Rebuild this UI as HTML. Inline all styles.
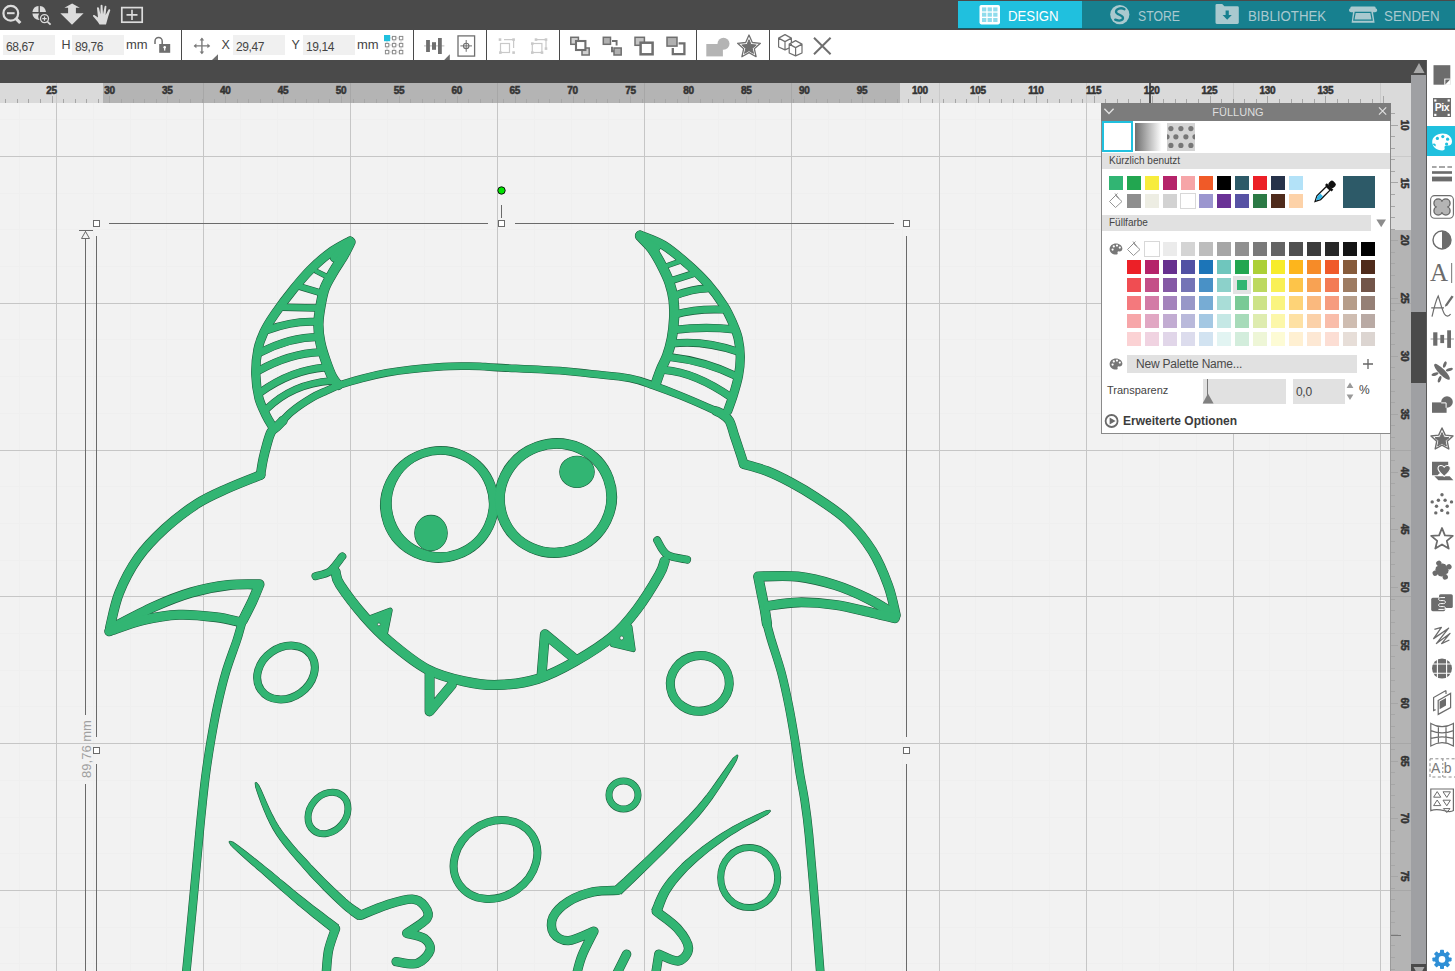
<!DOCTYPE html>
<html><head><meta charset="utf-8"><title>Design</title>
<style>
*{margin:0;padding:0;box-sizing:border-box}
html,body{width:1455px;height:971px;overflow:hidden;background:#fff;font-family:"Liberation Sans",sans-serif}
.abs{position:absolute}
#top{left:0;top:0;width:1455px;height:30px;background:#4a4a4a}
#tool{left:0;top:30px;width:1455px;height:30px;background:#fff}
#band{left:0;top:60px;width:1427px;height:23px;background:#4a4a4a}
#canvas{left:0;top:103px;width:1391px;height:868px;background:#f2f2f2}
#side{left:1427px;top:60px;width:28px;height:911px;background:#fff}
.fld{position:absolute;top:35px;height:20px;background:#f0f0f0;color:#444;font-size:12px;line-height:24px;overflow:hidden;padding-left:3px;letter-spacing:-0.4px}
.lbl{position:absolute;top:35px;height:20px;color:#444;font-size:13px;line-height:20px}
.lbl.c{font-size:12.5px;line-height:20px}
.dv{position:absolute;top:30px;width:1px;height:30px;background:#4a4a4a}
.tab{position:absolute;top:1px;height:27px;color:#a9c9cf;font-size:15px;line-height:29px;white-space:nowrap;transform-origin:0 50%}
.rl{position:absolute;font-weight:bold;font-size:10px;color:#333;-webkit-text-stroke:0.5px #333;line-height:10px;letter-spacing:-0.3px;white-space:nowrap}
svg{position:absolute;left:0;top:0;overflow:visible}
</style></head><body>
<div class="abs" id="top"></div>
<div class="abs" id="tool"></div>
<div class="abs" id="band"></div>
<div class="abs" id="canvas"></div>

<svg width="1455" height="971" viewBox="0 0 1455 971" shape-rendering="crispEdges">
<path d="M19.5 103V971M93.5 103V971M130.5 103V971M166.5 103V971M240.5 103V971M277.5 103V971M313.5 103V971M387.5 103V971M424.5 103V971M461.5 103V971M534.5 103V971M571.5 103V971M608.5 103V971M681.5 103V971M718.5 103V971M755.5 103V971M828.5 103V971M865.5 103V971M902.5 103V971M975.5 103V971M1012.5 103V971M1049.5 103V971M1122.5 103V971M1159.5 103V971M1196.5 103V971M1269.5 103V971M1306.5 103V971M1343.5 103V971M0 119.5H1391M0 193.5H1391M0 229.5H1391M0 266.5H1391M0 339.5H1391M0 376.5H1391M0 413.5H1391M0 486.5H1391M0 523.5H1391M0 560.5H1391M0 633.5H1391M0 670.5H1391M0 706.5H1391M0 780.5H1391M0 817.5H1391M0 853.5H1391M0 927.5H1391M0 963.5H1391" stroke="#efefef" stroke-width="1" fill="none"/>
<path d="M0 156.5H1391M56.5 103V971M0 303.5H1391M203.5 103V971M0 450.5H1391M350.5 103V971M0 596.5H1391M497.5 103V971M0 743.5H1391M644.5 103V971M0 890.5H1391M791.5 103V971M939.5 103V971M1086.5 103V971M1233.5 103V971M1380.5 103V971" stroke="#c6c6c6" stroke-width="1" fill="none"/>
</svg>
<svg width="1455" height="971" viewBox="0 0 1455 971"><defs><clipPath id="cv"><rect x="0" y="103" width="1391" height="868"/></clipPath></defs><g clip-path="url(#cv)">
<g fill="none" stroke="#1b5a3a" stroke-linecap="round" stroke-linejoin="round">
<path d="M350.0 241.0C346.7 242.9 336.6 247.9 330.0 252.7C323.4 257.5 316.3 263.9 310.2 270.0C304.1 276.1 299.1 282.2 293.2 289.5C287.3 296.8 279.8 306.7 274.9 313.8C270.0 320.9 266.8 326.0 264.0 332.0C261.2 338.0 259.3 342.6 257.9 349.7C256.5 356.8 255.6 366.4 255.8 374.4C256.0 382.4 257.2 391.1 258.9 397.9C260.6 404.7 263.8 410.4 266.0 415.2C268.2 419.9 271.3 424.5 272.4 426.4" stroke-width="9.3"/>
<path d="M348.5 243L334 258" stroke-width="8.0"/>
<path d="M350.5 242.0C349.4 244.2 346.4 250.5 343.6 255.4C340.8 260.3 336.7 266.0 333.6 271.4C330.5 276.8 326.9 282.3 324.8 287.8C322.7 293.3 321.9 298.5 320.8 304.5C319.7 310.5 318.5 317.6 318.4 323.9C318.3 330.2 319.1 336.4 320.3 342.3C321.5 348.2 323.3 353.8 325.3 359.6C327.3 365.4 330.0 372.7 332.1 376.9C334.2 381.1 337.0 383.6 338.0 385.0" stroke-width="10.3"/>
<path d="M316.6 271.4L325.3 275.7" stroke-width="5.5"/>
<path d="M300.6 286.8L319.1 292.4" stroke-width="7.0"/>
<path d="M282 307.2L316.6 308" stroke-width="7.4"/>
<path d="M267.8 330.0Q292.2 320.7 315.4 321.8" stroke-width="8.0"/>
<path d="M259.8 352.8Q289.3 337.1 319.1 337.0" stroke-width="8.0"/>
<path d="M258.5 370.7Q289.4 353.3 320.3 352.2" stroke-width="8.0"/>
<path d="M259.8 392.7Q291.2 370.0 325.3 367.4" stroke-width="8.0"/>
<path d="M266.6 409.0Q292.5 383.7 330.9 380.9" stroke-width="7.5"/>
<path d="M260.5 475.0C260.9 472.4 262.1 464.2 263.2 459.1C264.3 454.0 265.6 448.8 266.9 444.3C268.2 439.8 269.5 434.8 271.2 431.9C272.9 428.9 273.6 430.0 277.0 426.6C280.4 423.2 286.1 416.3 291.9 411.5C297.7 406.7 306.0 401.3 311.7 397.9C317.4 394.5 321.1 393.2 326.0 391.0C330.9 388.8 334.8 386.7 340.8 384.6C346.8 382.5 354.3 380.4 361.9 378.4C369.5 376.4 378.4 374.3 386.6 372.8C394.9 371.3 403.1 370.2 411.4 369.3C419.6 368.4 427.9 367.7 436.1 367.2C444.4 366.7 453.6 366.3 460.9 366.2C468.2 366.1 474.0 366.1 480.0 366.3C486.0 366.5 483.6 366.8 496.9 367.5C510.2 368.2 544.6 369.7 560.0 370.7C575.4 371.8 577.8 372.4 589.5 373.7C601.2 375.0 619.3 376.3 630.0 378.3C640.7 380.3 645.2 382.6 653.5 385.5C661.8 388.4 671.5 392.1 680.0 395.5C688.5 398.9 697.7 402.9 704.7 406.0C711.7 409.1 717.9 411.5 722.0 414.0C726.1 416.5 727.3 417.2 729.4 420.8C731.5 424.4 732.5 430.0 734.4 435.6C736.3 441.2 739.0 449.5 740.6 454.2C742.2 458.9 743.2 462.4 743.7 464.0" stroke-width="7.8"/>
<path d="M716.0 411.0C717.0 411.5 719.8 412.4 722.0 414.0C724.2 415.6 727.3 417.2 729.4 420.8C731.5 424.4 732.5 430.0 734.4 435.6C736.3 441.2 739.0 449.5 740.6 454.2C742.2 458.9 743.2 462.4 743.7 464.0" stroke-width="9.6"/>
<path d="M283.0 420.5C282.0 421.5 279.0 424.7 277.0 426.6C275.0 428.5 272.9 428.9 271.2 431.9C269.5 434.8 268.2 439.8 266.9 444.3C265.6 448.8 264.3 454.0 263.2 459.1C262.1 464.2 260.9 472.4 260.5 475.0" stroke-width="9.6"/>
<path d="M640.0 235.0C643.9 236.7 655.7 240.4 663.6 245.2C671.5 250.0 679.9 257.4 687.2 263.8C694.5 270.2 701.1 276.5 707.2 283.4C713.3 290.3 719.4 298.7 723.7 305.4C728.0 312.1 730.6 318.3 733.0 323.8C735.4 329.3 737.0 333.0 738.2 338.5C739.4 344.0 740.2 350.8 740.3 357.0C740.3 363.2 739.7 369.2 738.5 375.6C737.3 382.0 735.0 389.5 733.2 395.4C731.4 401.3 728.6 408.3 727.7 410.9" stroke-width="9.3"/>
<path d="M642 237.5L656.5 248" stroke-width="8.0"/>
<path d="M640.0 236.0C640.4 236.4 640.4 236.3 642.4 238.5C644.4 240.7 648.6 244.2 652.0 249.0C655.4 253.8 659.9 261.9 662.8 267.6C665.7 273.3 667.8 277.6 669.6 283.0C671.4 288.4 672.8 293.8 673.5 299.7C674.2 305.6 674.4 311.8 674.1 318.3C673.8 324.8 673.0 332.2 671.8 338.5C670.6 344.8 668.9 350.7 667.1 355.8C665.3 360.9 662.7 365.0 660.9 369.4C659.1 373.8 657.0 380.2 656.2 382.4" stroke-width="10.3"/>
<path d="M663.4 267L679.4 261.4" stroke-width="5.5"/>
<path d="M669.6 281.2L693 273.8" stroke-width="7.2"/>
<path d="M673.9 296.0Q693.3 288.7 706.6 288.6" stroke-width="8.0"/>
<path d="M674.5 314.6Q697.4 308.3 722.7 309.6" stroke-width="8.0"/>
<path d="M674.5 329.8Q704.3 326.1 733.8 329.3" stroke-width="8.3"/>
<path d="M672.0 343.5Q703.7 339.9 737.5 351.5" stroke-width="8.0"/>
<path d="M669.6 357.1Q705.5 361.1 736.3 376.2" stroke-width="8.0"/>
<path d="M664.6 370.0Q695.1 372.3 732.0 397.9" stroke-width="8.0"/>
<path d="M260.6 475.0C255.1 477.2 238.2 483.6 227.7 488.4C217.1 493.2 207.6 497.0 197.2 503.7C186.7 510.4 174.9 519.4 165.0 528.4C155.1 537.5 145.4 547.4 137.8 558.1C130.2 568.9 123.8 581.4 119.2 592.8C114.6 604.1 111.7 620.8 110.2 626.4" stroke-width="9.8"/>
<path d="M110.2 628.9C117.5 625.2 140.7 612.7 154.2 606.6C167.8 600.5 179.0 596.1 191.3 592.5C203.7 588.9 217.1 586.4 228.5 585.1C239.8 583.7 254.2 584.5 259.4 584.3C258.2 587.3 254.8 596.1 252.0 602.0C249.2 607.9 244.5 617.0 243.0 620.0" stroke-width="10.2"/>
<path d="M252.0 602.0C250.5 605.0 245.5 613.7 243.0 620.0C240.5 626.3 239.8 631.2 236.9 640.0C234.0 648.8 228.8 662.0 225.6 673.0C222.3 684.0 219.8 695.0 217.4 706.0C215.0 717.0 213.1 727.8 211.2 738.8C209.3 749.8 207.5 761.6 206.1 771.8C204.7 782.0 203.9 789.6 202.8 800.0C201.7 810.4 201.1 815.9 199.4 834.0C197.7 852.1 194.7 885.0 192.5 908.5C190.3 932.0 187.1 963.9 186.0 975.0" stroke-width="8.7"/>
<path d="M109.2 631.3C114.8 629.5 131.5 623.0 143.1 620.2C154.7 617.4 166.8 615.3 179.0 614.8C191.1 614.3 206.0 616.0 216.1 617.2C226.2 618.4 235.7 621.2 239.6 621.9" stroke-width="10.0"/>
<path d="M743.7 464.0C747.5 465.1 758.6 467.8 766.5 470.9C774.4 474.0 783.0 478.2 791.2 482.6C799.5 487.0 806.6 491.1 816.0 497.4C825.4 503.7 838.1 511.6 847.4 520.5C856.8 529.4 865.4 540.1 872.2 550.9C879.0 561.8 884.3 574.8 888.2 585.6C892.2 596.3 894.6 610.3 895.9 615.3" stroke-width="9.8"/>
<path d="M893.3 613.4C889.0 610.9 877.0 603.0 867.3 598.3C857.6 593.6 846.6 588.6 835.1 585.0C823.6 581.4 810.8 578.0 798.0 576.6C785.2 575.2 764.8 576.5 758.2 576.5C758.8 579.2 760.4 587.5 761.5 593.0C762.6 598.5 763.8 604.3 764.8 609.5C765.7 614.7 766.6 621.6 767.0 624.0" stroke-width="10.2"/>
<path d="M764.8 609.5C765.1 611.9 765.9 618.9 767.0 624.0C768.1 629.1 768.9 631.8 771.3 640.0C773.7 648.2 778.6 662.0 781.5 673.0C784.4 684.0 786.7 695.0 788.9 706.0C791.1 717.0 792.9 727.8 794.7 738.8C796.5 749.8 798.0 761.6 799.6 771.8C801.2 782.0 803.0 789.5 804.6 800.0C806.2 810.5 807.3 817.5 809.0 835.0C810.7 852.5 813.1 881.7 815.0 905.0C816.9 928.3 819.6 963.3 820.5 975.0" stroke-width="8.7"/>
<path d="M767.8 605.9C772.8 605.3 786.7 602.6 797.9 602.4C809.2 602.2 822.7 603.1 835.1 604.9C847.4 606.6 862.2 610.6 872.2 612.8C882.1 615.0 891.1 617.3 894.9 618.2" stroke-width="10.0"/>
<path d="M380.5 504.5a59.0 57.5 0 1 0 118.0 0a59.0 57.5 0 1 0 -118.0 0ZM391.6 503.8a49.0 49.2 0 1 0 98.0 0a49.0 49.2 0 1 0 -98.0 0Z" transform="rotate(-20 439.5 504.5)" fill="#1b5a3a" fill-rule="evenodd" stroke-width="1.1"/>
<path d="M494.7 498.0a61.0 59.0 0 1 0 122.0 0a61.0 59.0 0 1 0 -122.0 0ZM504.1 498.2a51.4 49.8 0 1 0 102.8 0a51.4 49.8 0 1 0 -102.8 0Z" transform="rotate(-20 555.7 498.0)" fill="#1b5a3a" fill-rule="evenodd" stroke-width="1.1"/>
<ellipse cx="431.0" cy="533.0" rx="16.2" ry="17.6" fill="#1b5a3a" stroke-width="1.1"/>
<ellipse cx="577.0" cy="471.8" rx="17.2" ry="15.6" fill="#1b5a3a" stroke-width="1.1"/>
<path d="M335.5 571.9C336.3 574.0 335.1 577.2 340.0 584.7C344.9 592.2 356.5 607.4 364.7 616.9C373.0 626.4 379.2 633.0 389.5 641.6C399.8 650.3 414.2 662.3 426.6 668.9C439.0 675.5 451.8 678.6 463.7 681.2C475.7 683.9 486.0 685.4 498.4 684.9C510.7 684.5 525.2 682.7 537.9 678.8C550.7 674.8 562.7 668.5 575.1 661.4C587.4 654.4 601.9 645.4 612.2 636.7C622.5 628.0 629.1 619.8 636.9 609.5C644.7 599.2 654.6 582.9 659.2 574.8C663.8 566.8 663.7 563.5 664.6 561.2" stroke-width="10.2"/>
<path d="M315.5 576.2C317.9 575.3 325.4 574.5 329.9 571.2C334.4 567.9 340.2 558.8 342.3 556.4" stroke-width="8.0"/>
<path d="M657.2 540.3C658.8 542.7 662.1 551.4 667.1 554.6C672.1 557.9 683.8 558.8 687.1 559.6" stroke-width="8.0"/>
<path d="M370.9 617.4L390.2 610.2L385.8 632.2Z" fill="#1b5a3a" stroke-width="5.0"/>
<path d="M429.6 674.3L429.6 711.4L451.8 684.9" stroke-width="10.0"/>
<path d="M541.6 675.1L544.9 634.2L575.1 659.0" stroke-width="10.0"/>
<path d="M612.2 644.6L633.2 649.6L630.0 626.8Z" fill="#1b5a3a" stroke-width="5.0"/>
<ellipse cx="286.0" cy="672.5" rx="30.5" ry="25.0" transform="rotate(-35 286.0 672.5)" stroke-width="8.0"/>
<ellipse cx="699.8" cy="683.4" rx="29.5" ry="27.8" transform="rotate(-10 699.8 683.4)" stroke-width="9.0"/>
<ellipse cx="328.0" cy="813.0" rx="22.5" ry="18.0" transform="rotate(-50 328.0 813.0)" stroke-width="7.0"/>
<ellipse cx="623.5" cy="795.0" rx="14.5" ry="14.0" transform="rotate(0 623.5 795.0)" stroke-width="7.0"/>
<ellipse cx="495.5" cy="859.5" rx="44.0" ry="37.0" transform="rotate(-35 495.5 859.5)" stroke-width="8.0"/>
<ellipse cx="749.2" cy="877.6" rx="28.5" ry="30.0" transform="rotate(0 749.2 877.6)" stroke-width="7.0"/>
<path d="M255.3 783.0L255.7 786.9L257.3 791.8L259.3 797.5L261.6 803.9L264.3 810.6L267.2 817.3L270.3 823.7L273.5 829.6L276.9 835.1L280.6 840.4L284.5 845.6L288.6 850.7L292.8 855.7L297.1 860.6L301.3 865.4L305.5 870.2L309.8 875.0L314.3 879.9L319.0 884.7L323.6 889.5L328.2 894.0L332.5 898.3L336.5 902.1L340.0 905.4L343.2 908.3L346.1 910.8L348.8 912.9L351.1 914.7L353.2 916.2L355.0 917.4L356.4 918.4L357.5 919.2L362.9 911.5L361.6 910.7L360.0 909.7L358.3 908.6L356.3 907.3L354.1 905.8L351.6 903.9L348.8 901.7L345.8 899.1L342.3 895.9L338.3 892.2L333.9 888.1L329.3 883.7L324.6 879.1L320.0 874.4L315.4 869.7L311.0 865.1L306.8 860.5L302.5 855.8L298.1 851.1L293.9 846.3L289.8 841.4L285.8 836.5L282.1 831.5L278.7 826.5L275.4 821.0L272.2 814.9L269.1 808.4L266.2 802.0L263.5 795.8L261.1 790.3L258.9 785.7L256.3 782.6Z" fill="#1b5a3a" stroke-width="1.2"/>
<path d="M360.2 915.4C364.7 913.6 378.8 907.5 387.4 904.7C396.1 902.0 406.0 898.8 412.2 899.1C418.4 899.3 422.1 902.8 424.5 906.0C427.0 909.2 430.0 913.8 427.0 918.4C424.0 922.9 410.1 930.7 406.7 933.2C409.7 934.1 420.7 935.8 424.5 938.6C428.4 941.5 431.2 946.4 430.0 950.5C428.7 954.6 422.8 961.5 417.1 963.4C411.5 965.2 399.6 961.9 396.1 961.6" stroke-width="9.4"/>
<path d="M229.2 842.0L231.0 845.2L234.2 848.4L238.2 852.0L242.6 856.0L247.3 860.2L252.2 864.5L257.0 868.7L261.6 872.6L266.0 876.5L270.5 880.6L275.1 884.6L279.8 888.8L284.5 892.9L289.1 896.9L293.7 900.9L298.2 904.7L302.9 908.6L307.8 912.6L312.8 916.7L317.7 920.6L322.4 924.3L326.5 927.6L330.0 930.3L332.6 932.4L338.4 925.0L335.7 923.0L332.1 920.3L327.9 917.2L323.2 913.6L318.2 909.8L313.1 905.9L308.1 902.0L303.4 898.3L298.9 894.7L294.2 890.9L289.5 887.0L284.7 883.0L279.9 879.1L275.2 875.1L270.5 871.3L265.9 867.6L261.1 863.8L256.1 859.8L251.0 855.7L246.0 851.8L241.3 848.2L237.0 845.0L233.4 842.4L229.9 841.3Z" fill="#1b5a3a" stroke-width="1.2"/>
<path d="M335.5 928.7C334.3 932.4 330.1 942.8 328.5 950.5C327.0 958.3 326.5 971.1 326.1 975.3" stroke-width="9.4"/>
<path d="M737.0 755.1L733.4 758.1L729.7 763.0L725.6 768.9L721.0 775.4L716.2 782.2L711.3 789.0L706.5 795.5L701.9 801.2L697.5 806.4L693.2 811.2L688.8 815.9L684.3 820.5L679.7 825.1L674.9 829.8L669.8 834.8L664.5 840.0L658.5 845.8L651.8 852.2L644.6 859.1L637.3 865.9L630.3 872.4L624.0 878.4L618.6 883.3L614.7 887.0L621.2 893.8L625.0 890.0L630.3 885.0L636.5 879.0L643.4 872.3L650.6 865.4L657.7 858.4L664.4 851.8L670.3 845.8L675.5 840.5L680.5 835.4L685.2 830.5L689.7 825.7L694.2 820.9L698.5 816.0L702.8 810.8L707.1 805.4L711.6 799.3L716.3 792.5L721.0 785.5L725.5 778.4L729.7 771.6L733.5 765.4L736.4 760.2L737.8 755.7Z" fill="#1b5a3a" stroke-width="1.2"/>
<path d="M617.9 890.4C613.8 890.6 601.4 890.0 593.2 891.9C584.9 893.7 575.1 897.3 568.5 901.5C561.8 905.7 555.6 911.8 553.1 917.1C550.6 922.4 551.1 929.3 553.6 933.2C556.2 937.1 561.7 940.9 568.5 940.6C575.2 940.3 589.7 932.8 593.9 931.2C592.0 935.3 585.0 948.1 582.1 955.5C579.1 962.8 577.3 972.0 576.4 975.3" stroke-width="9.4"/>
<path d="M626.6 954.2L616.0 975.3" stroke-width="9.4"/>
<path d="M769.9 810.3L766.2 810.8L761.8 812.7L756.6 815.0L750.9 817.7L744.9 820.6L738.8 823.7L733.0 826.8L727.7 829.9L722.6 833.0L717.6 836.3L712.6 839.7L707.7 843.2L702.8 846.8L698.2 850.4L693.8 853.9L689.7 857.4L685.8 860.8L682.0 864.3L678.5 867.8L675.2 871.3L672.0 874.8L669.1 878.2L666.4 881.6L663.9 885.0L661.6 888.5L659.5 892.2L657.7 895.9L656.1 899.4L654.8 902.7L653.7 905.6L652.7 907.9L652.0 909.6L660.6 913.2L661.4 911.3L662.3 908.8L663.3 906.0L664.5 902.8L665.8 899.5L667.3 896.2L669.0 892.9L671.0 889.8L673.2 886.7L675.6 883.5L678.3 880.1L681.2 876.8L684.3 873.3L687.5 869.9L691.0 866.5L694.7 863.0L698.6 859.5L702.8 856.0L707.2 852.4L711.8 848.8L716.5 845.2L721.3 841.7L726.1 838.3L730.9 835.1L736.0 831.9L741.5 828.6L747.3 825.3L753.1 822.1L758.7 819.1L763.6 816.3L767.7 813.9L770.3 811.2Z" fill="#1b5a3a" stroke-width="1.2"/>
<path d="M656.3 911.4C659.8 914.2 672.0 922.1 677.3 928.2C682.7 934.4 688.2 942.6 688.5 948.0C688.7 953.5 683.5 959.9 678.6 960.9C673.6 961.9 662.1 955.3 658.8 954.2L655.5 975.3" stroke-width="9.4"/>
</g>
<g fill="none" stroke="#32b573" stroke-linecap="round" stroke-linejoin="round">
<path d="M350.0 241.0C346.7 242.9 336.6 247.9 330.0 252.7C323.4 257.5 316.3 263.9 310.2 270.0C304.1 276.1 299.1 282.2 293.2 289.5C287.3 296.8 279.8 306.7 274.9 313.8C270.0 320.9 266.8 326.0 264.0 332.0C261.2 338.0 259.3 342.6 257.9 349.7C256.5 356.8 255.6 366.4 255.8 374.4C256.0 382.4 257.2 391.1 258.9 397.9C260.6 404.7 263.8 410.4 266.0 415.2C268.2 419.9 271.3 424.5 272.4 426.4" stroke-width="8.2"/>
<path d="M348.5 243L334 258" stroke-width="6.9"/>
<path d="M350.5 242.0C349.4 244.2 346.4 250.5 343.6 255.4C340.8 260.3 336.7 266.0 333.6 271.4C330.5 276.8 326.9 282.3 324.8 287.8C322.7 293.3 321.9 298.5 320.8 304.5C319.7 310.5 318.5 317.6 318.4 323.9C318.3 330.2 319.1 336.4 320.3 342.3C321.5 348.2 323.3 353.8 325.3 359.6C327.3 365.4 330.0 372.7 332.1 376.9C334.2 381.1 337.0 383.6 338.0 385.0" stroke-width="9.2"/>
<path d="M316.6 271.4L325.3 275.7" stroke-width="4.4"/>
<path d="M300.6 286.8L319.1 292.4" stroke-width="5.9"/>
<path d="M282 307.2L316.6 308" stroke-width="6.3"/>
<path d="M267.8 330.0Q292.2 320.7 315.4 321.8" stroke-width="6.9"/>
<path d="M259.8 352.8Q289.3 337.1 319.1 337.0" stroke-width="6.9"/>
<path d="M258.5 370.7Q289.4 353.3 320.3 352.2" stroke-width="6.9"/>
<path d="M259.8 392.7Q291.2 370.0 325.3 367.4" stroke-width="6.9"/>
<path d="M266.6 409.0Q292.5 383.7 330.9 380.9" stroke-width="6.4"/>
<path d="M260.5 475.0C260.9 472.4 262.1 464.2 263.2 459.1C264.3 454.0 265.6 448.8 266.9 444.3C268.2 439.8 269.5 434.8 271.2 431.9C272.9 428.9 273.6 430.0 277.0 426.6C280.4 423.2 286.1 416.3 291.9 411.5C297.7 406.7 306.0 401.3 311.7 397.9C317.4 394.5 321.1 393.2 326.0 391.0C330.9 388.8 334.8 386.7 340.8 384.6C346.8 382.5 354.3 380.4 361.9 378.4C369.5 376.4 378.4 374.3 386.6 372.8C394.9 371.3 403.1 370.2 411.4 369.3C419.6 368.4 427.9 367.7 436.1 367.2C444.4 366.7 453.6 366.3 460.9 366.2C468.2 366.1 474.0 366.1 480.0 366.3C486.0 366.5 483.6 366.8 496.9 367.5C510.2 368.2 544.6 369.7 560.0 370.7C575.4 371.8 577.8 372.4 589.5 373.7C601.2 375.0 619.3 376.3 630.0 378.3C640.7 380.3 645.2 382.6 653.5 385.5C661.8 388.4 671.5 392.1 680.0 395.5C688.5 398.9 697.7 402.9 704.7 406.0C711.7 409.1 717.9 411.5 722.0 414.0C726.1 416.5 727.3 417.2 729.4 420.8C731.5 424.4 732.5 430.0 734.4 435.6C736.3 441.2 739.0 449.5 740.6 454.2C742.2 458.9 743.2 462.4 743.7 464.0" stroke-width="6.7"/>
<path d="M716.0 411.0C717.0 411.5 719.8 412.4 722.0 414.0C724.2 415.6 727.3 417.2 729.4 420.8C731.5 424.4 732.5 430.0 734.4 435.6C736.3 441.2 739.0 449.5 740.6 454.2C742.2 458.9 743.2 462.4 743.7 464.0" stroke-width="8.5"/>
<path d="M283.0 420.5C282.0 421.5 279.0 424.7 277.0 426.6C275.0 428.5 272.9 428.9 271.2 431.9C269.5 434.8 268.2 439.8 266.9 444.3C265.6 448.8 264.3 454.0 263.2 459.1C262.1 464.2 260.9 472.4 260.5 475.0" stroke-width="8.5"/>
<path d="M640.0 235.0C643.9 236.7 655.7 240.4 663.6 245.2C671.5 250.0 679.9 257.4 687.2 263.8C694.5 270.2 701.1 276.5 707.2 283.4C713.3 290.3 719.4 298.7 723.7 305.4C728.0 312.1 730.6 318.3 733.0 323.8C735.4 329.3 737.0 333.0 738.2 338.5C739.4 344.0 740.2 350.8 740.3 357.0C740.3 363.2 739.7 369.2 738.5 375.6C737.3 382.0 735.0 389.5 733.2 395.4C731.4 401.3 728.6 408.3 727.7 410.9" stroke-width="8.2"/>
<path d="M642 237.5L656.5 248" stroke-width="6.9"/>
<path d="M640.0 236.0C640.4 236.4 640.4 236.3 642.4 238.5C644.4 240.7 648.6 244.2 652.0 249.0C655.4 253.8 659.9 261.9 662.8 267.6C665.7 273.3 667.8 277.6 669.6 283.0C671.4 288.4 672.8 293.8 673.5 299.7C674.2 305.6 674.4 311.8 674.1 318.3C673.8 324.8 673.0 332.2 671.8 338.5C670.6 344.8 668.9 350.7 667.1 355.8C665.3 360.9 662.7 365.0 660.9 369.4C659.1 373.8 657.0 380.2 656.2 382.4" stroke-width="9.2"/>
<path d="M663.4 267L679.4 261.4" stroke-width="4.4"/>
<path d="M669.6 281.2L693 273.8" stroke-width="6.1"/>
<path d="M673.9 296.0Q693.3 288.7 706.6 288.6" stroke-width="6.9"/>
<path d="M674.5 314.6Q697.4 308.3 722.7 309.6" stroke-width="6.9"/>
<path d="M674.5 329.8Q704.3 326.1 733.8 329.3" stroke-width="7.2"/>
<path d="M672.0 343.5Q703.7 339.9 737.5 351.5" stroke-width="6.9"/>
<path d="M669.6 357.1Q705.5 361.1 736.3 376.2" stroke-width="6.9"/>
<path d="M664.6 370.0Q695.1 372.3 732.0 397.9" stroke-width="6.9"/>
<path d="M260.6 475.0C255.1 477.2 238.2 483.6 227.7 488.4C217.1 493.2 207.6 497.0 197.2 503.7C186.7 510.4 174.9 519.4 165.0 528.4C155.1 537.5 145.4 547.4 137.8 558.1C130.2 568.9 123.8 581.4 119.2 592.8C114.6 604.1 111.7 620.8 110.2 626.4" stroke-width="8.7"/>
<path d="M110.2 628.9C117.5 625.2 140.7 612.7 154.2 606.6C167.8 600.5 179.0 596.1 191.3 592.5C203.7 588.9 217.1 586.4 228.5 585.1C239.8 583.7 254.2 584.5 259.4 584.3C258.2 587.3 254.8 596.1 252.0 602.0C249.2 607.9 244.5 617.0 243.0 620.0" stroke-width="9.1"/>
<path d="M252.0 602.0C250.5 605.0 245.5 613.7 243.0 620.0C240.5 626.3 239.8 631.2 236.9 640.0C234.0 648.8 228.8 662.0 225.6 673.0C222.3 684.0 219.8 695.0 217.4 706.0C215.0 717.0 213.1 727.8 211.2 738.8C209.3 749.8 207.5 761.6 206.1 771.8C204.7 782.0 203.9 789.6 202.8 800.0C201.7 810.4 201.1 815.9 199.4 834.0C197.7 852.1 194.7 885.0 192.5 908.5C190.3 932.0 187.1 963.9 186.0 975.0" stroke-width="7.6"/>
<path d="M109.2 631.3C114.8 629.5 131.5 623.0 143.1 620.2C154.7 617.4 166.8 615.3 179.0 614.8C191.1 614.3 206.0 616.0 216.1 617.2C226.2 618.4 235.7 621.2 239.6 621.9" stroke-width="8.9"/>
<path d="M743.7 464.0C747.5 465.1 758.6 467.8 766.5 470.9C774.4 474.0 783.0 478.2 791.2 482.6C799.5 487.0 806.6 491.1 816.0 497.4C825.4 503.7 838.1 511.6 847.4 520.5C856.8 529.4 865.4 540.1 872.2 550.9C879.0 561.8 884.3 574.8 888.2 585.6C892.2 596.3 894.6 610.3 895.9 615.3" stroke-width="8.7"/>
<path d="M893.3 613.4C889.0 610.9 877.0 603.0 867.3 598.3C857.6 593.6 846.6 588.6 835.1 585.0C823.6 581.4 810.8 578.0 798.0 576.6C785.2 575.2 764.8 576.5 758.2 576.5C758.8 579.2 760.4 587.5 761.5 593.0C762.6 598.5 763.8 604.3 764.8 609.5C765.7 614.7 766.6 621.6 767.0 624.0" stroke-width="9.1"/>
<path d="M764.8 609.5C765.1 611.9 765.9 618.9 767.0 624.0C768.1 629.1 768.9 631.8 771.3 640.0C773.7 648.2 778.6 662.0 781.5 673.0C784.4 684.0 786.7 695.0 788.9 706.0C791.1 717.0 792.9 727.8 794.7 738.8C796.5 749.8 798.0 761.6 799.6 771.8C801.2 782.0 803.0 789.5 804.6 800.0C806.2 810.5 807.3 817.5 809.0 835.0C810.7 852.5 813.1 881.7 815.0 905.0C816.9 928.3 819.6 963.3 820.5 975.0" stroke-width="7.6"/>
<path d="M767.8 605.9C772.8 605.3 786.7 602.6 797.9 602.4C809.2 602.2 822.7 603.1 835.1 604.9C847.4 606.6 862.2 610.6 872.2 612.8C882.1 615.0 891.1 617.3 894.9 618.2" stroke-width="8.9"/>
<path d="M380.5 504.5a59.0 57.5 0 1 0 118.0 0a59.0 57.5 0 1 0 -118.0 0ZM391.6 503.8a49.0 49.2 0 1 0 98.0 0a49.0 49.2 0 1 0 -98.0 0Z" transform="rotate(-20 439.5 504.5)" fill="#32b573" fill-rule="evenodd" stroke-width="0.1"/>
<path d="M494.7 498.0a61.0 59.0 0 1 0 122.0 0a61.0 59.0 0 1 0 -122.0 0ZM504.1 498.2a51.4 49.8 0 1 0 102.8 0a51.4 49.8 0 1 0 -102.8 0Z" transform="rotate(-20 555.7 498.0)" fill="#32b573" fill-rule="evenodd" stroke-width="0.1"/>
<ellipse cx="431.0" cy="533.0" rx="16.2" ry="17.6" fill="#32b573" stroke-width="0.1"/>
<ellipse cx="577.0" cy="471.8" rx="17.2" ry="15.6" fill="#32b573" stroke-width="0.1"/>
<path d="M335.5 571.9C336.3 574.0 335.1 577.2 340.0 584.7C344.9 592.2 356.5 607.4 364.7 616.9C373.0 626.4 379.2 633.0 389.5 641.6C399.8 650.3 414.2 662.3 426.6 668.9C439.0 675.5 451.8 678.6 463.7 681.2C475.7 683.9 486.0 685.4 498.4 684.9C510.7 684.5 525.2 682.7 537.9 678.8C550.7 674.8 562.7 668.5 575.1 661.4C587.4 654.4 601.9 645.4 612.2 636.7C622.5 628.0 629.1 619.8 636.9 609.5C644.7 599.2 654.6 582.9 659.2 574.8C663.8 566.8 663.7 563.5 664.6 561.2" stroke-width="9.1"/>
<path d="M315.5 576.2C317.9 575.3 325.4 574.5 329.9 571.2C334.4 567.9 340.2 558.8 342.3 556.4" stroke-width="6.9"/>
<path d="M657.2 540.3C658.8 542.7 662.1 551.4 667.1 554.6C672.1 557.9 683.8 558.8 687.1 559.6" stroke-width="6.9"/>
<path d="M370.9 617.4L390.2 610.2L385.8 632.2Z" fill="#32b573" stroke-width="3.9"/>
<path d="M429.6 674.3L429.6 711.4L451.8 684.9" stroke-width="8.9"/>
<path d="M541.6 675.1L544.9 634.2L575.1 659.0" stroke-width="8.9"/>
<path d="M612.2 644.6L633.2 649.6L630.0 626.8Z" fill="#32b573" stroke-width="3.9"/>
<ellipse cx="286.0" cy="672.5" rx="30.5" ry="25.0" transform="rotate(-35 286.0 672.5)" stroke-width="6.9"/>
<ellipse cx="699.8" cy="683.4" rx="29.5" ry="27.8" transform="rotate(-10 699.8 683.4)" stroke-width="7.9"/>
<ellipse cx="328.0" cy="813.0" rx="22.5" ry="18.0" transform="rotate(-50 328.0 813.0)" stroke-width="5.9"/>
<ellipse cx="623.5" cy="795.0" rx="14.5" ry="14.0" transform="rotate(0 623.5 795.0)" stroke-width="5.9"/>
<ellipse cx="495.5" cy="859.5" rx="44.0" ry="37.0" transform="rotate(-35 495.5 859.5)" stroke-width="6.9"/>
<ellipse cx="749.2" cy="877.6" rx="28.5" ry="30.0" transform="rotate(0 749.2 877.6)" stroke-width="5.9"/>
<path d="M255.3 783.0L255.7 786.9L257.3 791.8L259.3 797.5L261.6 803.9L264.3 810.6L267.2 817.3L270.3 823.7L273.5 829.6L276.9 835.1L280.6 840.4L284.5 845.6L288.6 850.7L292.8 855.7L297.1 860.6L301.3 865.4L305.5 870.2L309.8 875.0L314.3 879.9L319.0 884.7L323.6 889.5L328.2 894.0L332.5 898.3L336.5 902.1L340.0 905.4L343.2 908.3L346.1 910.8L348.8 912.9L351.1 914.7L353.2 916.2L355.0 917.4L356.4 918.4L357.5 919.2L362.9 911.5L361.6 910.7L360.0 909.7L358.3 908.6L356.3 907.3L354.1 905.8L351.6 903.9L348.8 901.7L345.8 899.1L342.3 895.9L338.3 892.2L333.9 888.1L329.3 883.7L324.6 879.1L320.0 874.4L315.4 869.7L311.0 865.1L306.8 860.5L302.5 855.8L298.1 851.1L293.9 846.3L289.8 841.4L285.8 836.5L282.1 831.5L278.7 826.5L275.4 821.0L272.2 814.9L269.1 808.4L266.2 802.0L263.5 795.8L261.1 790.3L258.9 785.7L256.3 782.6Z" fill="#32b573" stroke-width="0.1"/>
<path d="M360.2 915.4C364.7 913.6 378.8 907.5 387.4 904.7C396.1 902.0 406.0 898.8 412.2 899.1C418.4 899.3 422.1 902.8 424.5 906.0C427.0 909.2 430.0 913.8 427.0 918.4C424.0 922.9 410.1 930.7 406.7 933.2C409.7 934.1 420.7 935.8 424.5 938.6C428.4 941.5 431.2 946.4 430.0 950.5C428.7 954.6 422.8 961.5 417.1 963.4C411.5 965.2 399.6 961.9 396.1 961.6" stroke-width="8.3"/>
<path d="M229.2 842.0L231.0 845.2L234.2 848.4L238.2 852.0L242.6 856.0L247.3 860.2L252.2 864.5L257.0 868.7L261.6 872.6L266.0 876.5L270.5 880.6L275.1 884.6L279.8 888.8L284.5 892.9L289.1 896.9L293.7 900.9L298.2 904.7L302.9 908.6L307.8 912.6L312.8 916.7L317.7 920.6L322.4 924.3L326.5 927.6L330.0 930.3L332.6 932.4L338.4 925.0L335.7 923.0L332.1 920.3L327.9 917.2L323.2 913.6L318.2 909.8L313.1 905.9L308.1 902.0L303.4 898.3L298.9 894.7L294.2 890.9L289.5 887.0L284.7 883.0L279.9 879.1L275.2 875.1L270.5 871.3L265.9 867.6L261.1 863.8L256.1 859.8L251.0 855.7L246.0 851.8L241.3 848.2L237.0 845.0L233.4 842.4L229.9 841.3Z" fill="#32b573" stroke-width="0.1"/>
<path d="M335.5 928.7C334.3 932.4 330.1 942.8 328.5 950.5C327.0 958.3 326.5 971.1 326.1 975.3" stroke-width="8.3"/>
<path d="M737.0 755.1L733.4 758.1L729.7 763.0L725.6 768.9L721.0 775.4L716.2 782.2L711.3 789.0L706.5 795.5L701.9 801.2L697.5 806.4L693.2 811.2L688.8 815.9L684.3 820.5L679.7 825.1L674.9 829.8L669.8 834.8L664.5 840.0L658.5 845.8L651.8 852.2L644.6 859.1L637.3 865.9L630.3 872.4L624.0 878.4L618.6 883.3L614.7 887.0L621.2 893.8L625.0 890.0L630.3 885.0L636.5 879.0L643.4 872.3L650.6 865.4L657.7 858.4L664.4 851.8L670.3 845.8L675.5 840.5L680.5 835.4L685.2 830.5L689.7 825.7L694.2 820.9L698.5 816.0L702.8 810.8L707.1 805.4L711.6 799.3L716.3 792.5L721.0 785.5L725.5 778.4L729.7 771.6L733.5 765.4L736.4 760.2L737.8 755.7Z" fill="#32b573" stroke-width="0.1"/>
<path d="M617.9 890.4C613.8 890.6 601.4 890.0 593.2 891.9C584.9 893.7 575.1 897.3 568.5 901.5C561.8 905.7 555.6 911.8 553.1 917.1C550.6 922.4 551.1 929.3 553.6 933.2C556.2 937.1 561.7 940.9 568.5 940.6C575.2 940.3 589.7 932.8 593.9 931.2C592.0 935.3 585.0 948.1 582.1 955.5C579.1 962.8 577.3 972.0 576.4 975.3" stroke-width="8.3"/>
<path d="M626.6 954.2L616.0 975.3" stroke-width="8.3"/>
<path d="M769.9 810.3L766.2 810.8L761.8 812.7L756.6 815.0L750.9 817.7L744.9 820.6L738.8 823.7L733.0 826.8L727.7 829.9L722.6 833.0L717.6 836.3L712.6 839.7L707.7 843.2L702.8 846.8L698.2 850.4L693.8 853.9L689.7 857.4L685.8 860.8L682.0 864.3L678.5 867.8L675.2 871.3L672.0 874.8L669.1 878.2L666.4 881.6L663.9 885.0L661.6 888.5L659.5 892.2L657.7 895.9L656.1 899.4L654.8 902.7L653.7 905.6L652.7 907.9L652.0 909.6L660.6 913.2L661.4 911.3L662.3 908.8L663.3 906.0L664.5 902.8L665.8 899.5L667.3 896.2L669.0 892.9L671.0 889.8L673.2 886.7L675.6 883.5L678.3 880.1L681.2 876.8L684.3 873.3L687.5 869.9L691.0 866.5L694.7 863.0L698.6 859.5L702.8 856.0L707.2 852.4L711.8 848.8L716.5 845.2L721.3 841.7L726.1 838.3L730.9 835.1L736.0 831.9L741.5 828.6L747.3 825.3L753.1 822.1L758.7 819.1L763.6 816.3L767.7 813.9L770.3 811.2Z" fill="#32b573" stroke-width="0.1"/>
<path d="M656.3 911.4C659.8 914.2 672.0 922.1 677.3 928.2C682.7 934.4 688.2 942.6 688.5 948.0C688.7 953.5 683.5 959.9 678.6 960.9C673.6 961.9 662.1 955.3 658.8 954.2L655.5 975.3" stroke-width="8.3"/>
</g>
<circle cx="378.9" cy="624.4" r="1.4" fill="#f2f2f2" stroke="#1b5a3a" stroke-width="0.6"/><circle cx="621.7" cy="638" r="1.9" fill="#f2f2f2" stroke="#1b5a3a" stroke-width="0.6"/>
</g></svg>
<svg width="1455" height="971" viewBox="0 0 1455 971">
<g shape-rendering="crispEdges" stroke="#6a6a6a" stroke-width="1" fill="none">
<path d="M109 223.5H488M515 223.5H894"/>
<path d="M96.5 236V737M96.5 764V971"/>
<path d="M906.5 236V737M906.5 764V971"/>
<path d="M501.5 205V218"/>
<path d="M85.5 231V715M85.5 784V971M79 230.5H93"/>
<rect x="93.5" y="220.5" width="6" height="6" fill="#fff"/>
<rect x="498.5" y="220.5" width="6" height="6" fill="#fff"/>
<rect x="903.5" y="220.5" width="6" height="6" fill="#fff"/>
<rect x="93.5" y="747.5" width="6" height="6" fill="#fff"/>
<rect x="903.5" y="747.5" width="6" height="6" fill="#fff"/>
</g>
<path d="M85.5 231.5L81.5 238.5H89.5Z" fill="#f2f2f2" stroke="#6a6a6a" stroke-width="1"/>
<circle cx="501.5" cy="190.5" r="3.7" fill="#00e400" stroke="#111" stroke-width="1"/>
</svg>
<div class="abs" style="left:57px;top:741px;width:60px;height:16px;line-height:16px;font-size:13px;color:#a0a0a0;text-align:center;transform:rotate(-90deg);white-space:nowrap">89,76 mm</div>
<div class="abs" style="left:0;top:83px;width:1411px;height:20px;background:#dadada"></div>
<div class="abs" style="left:103px;top:83px;width:797px;height:20px;background:#b4b4b4"></div>
<div class="abs" style="left:1391px;top:103px;width:20px;height:868px;background:#dadada"></div>
<div class="abs" style="left:1391px;top:230px;width:20px;height:741px;background:#b4b4b4"></div>
<div class="abs" style="left:1390px;top:103px;width:1px;height:868px;background:#9a9a9a"></div>
<svg width="1455" height="971" viewBox="0 0 1455 971" shape-rendering="crispEdges">
<path d="M5.5 99V103M17.5 99V103M28.5 99V103M40.5 99V103M52.5 96V103M63.5 99V103M75.5 99V103M86.5 99V103M98.5 99V103M109.5 96V103M121.5 99V103M133.5 99V103M144.5 99V103M156.5 99V103M167.5 96V103M179.5 99V103M190.5 99V103M202.5 99V103M214.5 99V103M225.5 96V103M237.5 99V103M248.5 99V103M260.5 99V103M272.5 99V103M283.5 96V103M295.5 99V103M306.5 99V103M318.5 99V103M329.5 99V103M341.5 96V103M353.5 99V103M364.5 99V103M376.5 99V103M387.5 99V103M399.5 96V103M410.5 99V103M422.5 99V103M434.5 99V103M445.5 99V103M457.5 96V103M468.5 99V103M480.5 99V103M492.5 99V103M503.5 99V103M515.5 96V103M526.5 99V103M538.5 99V103M549.5 99V103M561.5 99V103M573.5 96V103M584.5 99V103M596.5 99V103M607.5 99V103M619.5 99V103M630.5 96V103M642.5 99V103M654.5 99V103M665.5 99V103M677.5 99V103M688.5 96V103M700.5 99V103M712.5 99V103M723.5 99V103M735.5 99V103M746.5 96V103M758.5 99V103M769.5 99V103M781.5 99V103M793.5 99V103M804.5 96V103M816.5 99V103M827.5 99V103M839.5 99V103M851.5 99V103M862.5 96V103M874.5 99V103M885.5 99V103M897.5 99V103M908.5 99V103M920.5 96V103M932.5 99V103M943.5 99V103M955.5 99V103M966.5 99V103M978.5 96V103M989.5 99V103M1001.5 99V103M1013.5 99V103M1024.5 99V103M1036.5 96V103M1047.5 99V103M1059.5 99V103M1071.5 99V103M1082.5 99V103M1094.5 96V103M1105.5 99V103M1117.5 99V103M1128.5 99V103M1140.5 99V103M1152.5 96V103M1163.5 99V103M1175.5 99V103M1186.5 99V103M1198.5 99V103M1210.5 96V103M1221.5 99V103M1233.5 99V103M1244.5 99V103M1256.5 99V103M1267.5 96V103M1279.5 99V103M1291.5 99V103M1302.5 99V103M1314.5 99V103M1325.5 96V103M1337.5 99V103M1348.5 99V103M1360.5 99V103M1372.5 99V103M1383.5 96V103M1391 113.5H1395M1391 125.5H1398M1391 136.5H1395M1391 148.5H1395M1391 159.5H1395M1391 171.5H1395M1391 182.5H1398M1391 194.5H1395M1391 206.5H1395M1391 217.5H1395M1391 229.5H1395M1391 240.5H1398M1391 252.5H1395M1391 263.5H1395M1391 275.5H1395M1391 287.5H1395M1391 298.5H1398M1391 310.5H1395M1391 321.5H1395M1391 333.5H1395M1391 344.5H1395M1391 356.5H1398M1391 367.5H1395M1391 379.5H1395M1391 391.5H1395M1391 402.5H1395M1391 414.5H1398M1391 425.5H1395M1391 437.5H1395M1391 448.5H1395M1391 460.5H1395M1391 472.5H1398M1391 483.5H1395M1391 495.5H1395M1391 506.5H1395M1391 518.5H1395M1391 529.5H1398M1391 541.5H1395M1391 552.5H1395M1391 564.5H1395M1391 576.5H1395M1391 587.5H1398M1391 599.5H1395M1391 610.5H1395M1391 622.5H1395M1391 633.5H1395M1391 645.5H1398M1391 656.5H1395M1391 668.5H1395M1391 680.5H1395M1391 691.5H1395M1391 703.5H1398M1391 714.5H1395M1391 726.5H1395M1391 737.5H1395M1391 749.5H1395M1391 761.5H1398M1391 772.5H1395M1391 784.5H1395M1391 795.5H1395M1391 807.5H1395M1391 818.5H1398M1391 830.5H1395M1391 841.5H1395M1391 853.5H1395M1391 865.5H1395M1391 876.5H1398M1391 888.5H1395M1391 899.5H1395M1391 911.5H1395M1391 922.5H1395M1391 934.5H1398M1391 945.5H1395M1391 957.5H1395M1391 969.5H1395" stroke="#a6a6a6" stroke-width="1" fill="none"/>
<path d="M1391 156.5H1411M56.5 83V103M1391 303.5H1411M203.5 83V103M1391 450.5H1411M350.5 83V103M1391 596.5H1411M497.5 83V103M1391 743.5H1411M644.5 83V103M1391 890.5H1411M791.5 83V103M939.5 83V103M1086.5 83V103M1233.5 83V103M1380.5 83V103" stroke="#000" stroke-opacity="0.07" stroke-width="1" fill="none"/>
<path d="M1149.5 83V103" stroke="#555" stroke-width="2"/>
<path d="M1391 935.5H1401" stroke="#777" stroke-width="1"/>
</svg>
<div class="rl" style="left:36.5px;top:86px;width:30px;text-align:center">25</div>
<div class="rl" style="left:94.4px;top:86px;width:30px;text-align:center">30</div>
<div class="rl" style="left:152.3px;top:86px;width:30px;text-align:center">35</div>
<div class="rl" style="left:210.2px;top:86px;width:30px;text-align:center">40</div>
<div class="rl" style="left:268.1px;top:86px;width:30px;text-align:center">45</div>
<div class="rl" style="left:326.0px;top:86px;width:30px;text-align:center">50</div>
<div class="rl" style="left:383.9px;top:86px;width:30px;text-align:center">55</div>
<div class="rl" style="left:441.8px;top:86px;width:30px;text-align:center">60</div>
<div class="rl" style="left:499.7px;top:86px;width:30px;text-align:center">65</div>
<div class="rl" style="left:557.6px;top:86px;width:30px;text-align:center">70</div>
<div class="rl" style="left:615.5px;top:86px;width:30px;text-align:center">75</div>
<div class="rl" style="left:673.4px;top:86px;width:30px;text-align:center">80</div>
<div class="rl" style="left:731.3px;top:86px;width:30px;text-align:center">85</div>
<div class="rl" style="left:789.2px;top:86px;width:30px;text-align:center">90</div>
<div class="rl" style="left:847.1px;top:86px;width:30px;text-align:center">95</div>
<div class="rl" style="left:905.0px;top:86px;width:30px;text-align:center">100</div>
<div class="rl" style="left:962.9px;top:86px;width:30px;text-align:center">105</div>
<div class="rl" style="left:1020.8px;top:86px;width:30px;text-align:center">110</div>
<div class="rl" style="left:1078.7px;top:86px;width:30px;text-align:center">115</div>
<div class="rl" style="left:1136.6px;top:86px;width:30px;text-align:center">120</div>
<div class="rl" style="left:1194.5px;top:86px;width:30px;text-align:center">125</div>
<div class="rl" style="left:1252.4px;top:86px;width:30px;text-align:center">130</div>
<div class="rl" style="left:1310.3px;top:86px;width:30px;text-align:center">135</div>
<div class="rl" style="left:1388.5px;top:119.7px;width:30px;text-align:center;transform:rotate(90deg)">10</div>
<div class="rl" style="left:1388.5px;top:177.5px;width:30px;text-align:center;transform:rotate(90deg)">15</div>
<div class="rl" style="left:1388.5px;top:235.3px;width:30px;text-align:center;transform:rotate(90deg)">20</div>
<div class="rl" style="left:1388.5px;top:293.1px;width:30px;text-align:center;transform:rotate(90deg)">25</div>
<div class="rl" style="left:1388.5px;top:350.9px;width:30px;text-align:center;transform:rotate(90deg)">30</div>
<div class="rl" style="left:1388.5px;top:408.7px;width:30px;text-align:center;transform:rotate(90deg)">35</div>
<div class="rl" style="left:1388.5px;top:466.5px;width:30px;text-align:center;transform:rotate(90deg)">40</div>
<div class="rl" style="left:1388.5px;top:524.3px;width:30px;text-align:center;transform:rotate(90deg)">45</div>
<div class="rl" style="left:1388.5px;top:582.1px;width:30px;text-align:center;transform:rotate(90deg)">50</div>
<div class="rl" style="left:1388.5px;top:639.9px;width:30px;text-align:center;transform:rotate(90deg)">55</div>
<div class="rl" style="left:1388.5px;top:697.7px;width:30px;text-align:center;transform:rotate(90deg)">60</div>
<div class="rl" style="left:1388.5px;top:755.5px;width:30px;text-align:center;transform:rotate(90deg)">65</div>
<div class="rl" style="left:1388.5px;top:813.3px;width:30px;text-align:center;transform:rotate(90deg)">70</div>
<div class="rl" style="left:1388.5px;top:871.1px;width:30px;text-align:center;transform:rotate(90deg)">75</div>
<div class="abs" style="left:1411px;top:75px;width:16px;height:896px;background:#9fa0a3"></div>
<div class="abs" style="left:1411px;top:312px;width:16px;height:71px;background:#4a4a4a"></div>
<div class="abs" style="left:1411px;top:964px;width:16px;height:7px;background:#4a4a4a"></div>
<div class="abs" style="left:1426px;top:60px;width:1px;height:911px;background:#5a5a5a"></div>
<svg width="1455" height="971" viewBox="0 0 1455 971">
<path d="M1413.5 73L1419 63L1424.5 73Z" fill="#a8a8a8"/>
<path d="M1413.5 967L1419 977L1424.5 967Z" fill="#a8a8a8"/>
</svg>
<div class="abs" id="side"></div>
<div class="abs" style="left:1427px;top:126px;width:28px;height:30px;background:#20c0de"></div>
<div class="abs" style="left:1433px;top:98px;width:18px;height:19px;background:#6c6c6c;color:#fff;font-size:10.5px;font-weight:bold;line-height:19px;text-align:center;letter-spacing:-0.5px">Pix</div>
<div class="abs" style="left:1430px;top:259px;width:22px;height:28px;color:#6c6c6c;font-family:'Liberation Serif',serif;font-size:25px;line-height:28px">A</div>
<div class="abs" style="left:1431px;top:759px;width:24px;height:18px;color:#7a7a7a;font-size:14px;line-height:18px;letter-spacing:3.5px;white-space:nowrap;overflow:hidden">Ab</div>
<svg width="1455" height="971" viewBox="0 0 1455 971">
<rect x="1433.5" y="65.2" width="16.8" height="19.5" fill="#6c6c6c"/><rect x="1444.3" y="78.6" width="6.2" height="6.3" fill="#fff"/><path d="M1445.3 79.6H1450.2L1445.3 84.5Z" fill="#6c6c6c"/>
<rect x="1434.2" y="99.4" width="2.2" height="2.2" fill="#fff"/>
<rect x="1447.6" y="99.4" width="2.2" height="2.2" fill="#fff"/>
<rect x="1434.2" y="113.8" width="2.2" height="2.2" fill="#fff"/>
<rect x="1447.6" y="113.8" width="2.2" height="2.2" fill="#fff"/>
<g transform="translate(1442 142)"><path d="M0.6 -8.4C6 -8.4 10 -5 10 -0.6C10 2.6 7.6 3.8 5.2 3.6C3 3.4 2 4.6 2.6 6C3.2 7.4 2 8.4 0.2 8.4C-5.6 8.4 -9.8 4.8 -9.8 0C-9.8 -4.8 -5.4 -8.4 0.6 -8.4Z" fill="#fff"/><circle cx="-4.6" cy="-3.6" r="1.6" fill="#20c0de"/><circle cx="0.8" cy="-5.4" r="1.6" fill="#20c0de"/><circle cx="5.6" cy="-2.8" r="1.6" fill="#20c0de"/><circle cx="4.6" cy="2" r="1.6" fill="#20c0de"/><path d="M-9.8 2C-7.4 0.6 -5.4 2.2 -6.6 4.4Z" fill="#20c0de"/></g>
<path d="M1432 167H1436.6M1439 167H1445M1447.4 167H1452" stroke="#8a8a8a" stroke-width="1.6"/><rect x="1432" y="171.2" width="20" height="2.6" fill="#6c6c6c"/><rect x="1432" y="176.6" width="20" height="4.8" fill="#6c6c6c"/>
<rect x="1430.6" y="195.6" width="22.8" height="22.6" rx="4" fill="#fff" stroke="#6c6c6c" stroke-width="1.1"/>
<g fill="#b4b4b4" stroke="#6c6c6c" stroke-width="1.5"><circle cx="1438.2" cy="203.2" r="4.2"/><circle cx="1445.8" cy="203.2" r="4.2"/><circle cx="1438.2" cy="210.8" r="4.2"/><circle cx="1445.8" cy="210.8" r="4.2"/></g>
<g fill="#b4b4b4"><circle cx="1438.2" cy="203.2" r="3.4"/><circle cx="1445.8" cy="203.2" r="3.4"/><circle cx="1438.2" cy="210.8" r="3.4"/><circle cx="1445.8" cy="210.8" r="3.4"/><rect x="1437" y="202" width="10" height="10"/></g>
<circle cx="1442" cy="240" r="9" fill="#fff" stroke="#6c6c6c" stroke-width="1.4"/><path d="M1442 231A9 9 0 0 1 1442 249Z" fill="#6c6c6c"/>
<path d="M1451.6 263V283" stroke="#8a8a8a" stroke-width="1.2"/>
<path d="M1432 316.6C1434 308 1436 300 1438.2 296C1440 301 1441.6 309 1444.4 314C1446 316.8 1449 316.8 1450.6 314M1431.2 307.8H1444" fill="none" stroke="#6c6c6c" stroke-width="1.2"/>
<path d="M1445.4 304.6L1451.6 295.4L1453.6 296.8L1447.2 305.8L1444.8 306.8Z" fill="#6c6c6c"/>
<path d="M1430.6 339H1454" stroke="#9a9a9a" stroke-width="1"/><rect x="1433.2" y="332.3" width="4.2" height="13.4" fill="#6c6c6c"/><rect x="1440.3" y="334.9" width="3.8" height="8.2" fill="#6c6c6c"/><rect x="1447.2" y="330.3" width="3.8" height="17.6" fill="#6c6c6c"/>
<g transform="translate(1442 371.8)" fill="#6c6c6c"><ellipse rx="10.8" ry="3" transform="rotate(45)"/><ellipse cx="2.8" cy="-7.2" rx="3.4" ry="1.5" transform="rotate(-70 2.8 -7.2)"/><ellipse cx="7.4" cy="-2.2" rx="3.6" ry="1.5" transform="rotate(-18 7.4 -2.2)"/><ellipse cx="-7" cy="2.4" rx="3.6" ry="1.5" transform="rotate(-18 -7 2.4)"/><ellipse cx="-2.4" cy="7.4" rx="3.4" ry="1.5" transform="rotate(-70 -2.4 7.4)"/></g>
<rect x="1432" y="402.4" width="14.6" height="10.4" fill="#6c6c6c"/><circle cx="1447" cy="402" r="5.8" fill="#6c6c6c"/>
<path d="M1441.2 402.9H1446.1V407.8" fill="none" stroke="#fff" stroke-width="1"/><path d="M1441.2 402.4A5.8 5.8 0 0 0 1446.6 407.8" fill="none" stroke="#fff" stroke-width="0"/>
<path d="M1442.0 428.0L1445.3 435.1L1453.0 436.0L1447.3 441.3L1448.8 449.0L1442.0 445.2L1435.2 449.0L1436.7 441.3L1431.0 436.0L1438.7 435.1Z" fill="#fff" stroke="#6c6c6c" stroke-width="1.4" stroke-linejoin="round"/>
<path d="M1442.0 432.6L1444.0 437.2L1449.0 437.7L1445.2 441.1L1446.3 446.0L1442.0 443.4L1437.7 446.0L1438.8 441.1L1435.0 437.7L1440.0 437.2Z" fill="#6c6c6c" stroke="#6c6c6c" stroke-width="1" stroke-linejoin="round"/>
<path d="M1432 461.7H1448.2V473H1440L1437.4 475.2H1432Z" fill="#6c6c6c"/><path d="M1434.4 476.2H1449.6L1453.4 480.2H1438.4Z" fill="#6c6c6c"/>
<path d="M1444.2 476.4C1441 473.6 1437.6 471 1438 467.8C1438.4 465.2 1442.2 464.6 1444.2 467.2C1446.2 464.6 1450 465.2 1450.4 467.8C1450.8 471 1447.4 473.6 1444.2 476.4Z" fill="#6c6c6c" stroke="#fff" stroke-width="1.1"/>
<circle cx="1442.0" cy="494.7" r="1.7" fill="#6c6c6c"/>
<circle cx="1432.2" cy="501.9" r="1.7" fill="#6c6c6c"/>
<circle cx="1438.4" cy="500.2" r="1.7" fill="#6c6c6c"/>
<circle cx="1445.1" cy="500.2" r="1.7" fill="#6c6c6c"/>
<circle cx="1451.5" cy="501.9" r="1.7" fill="#6c6c6c"/>
<circle cx="1436.5" cy="506.2" r="1.7" fill="#6c6c6c"/>
<circle cx="1447.2" cy="506.2" r="1.7" fill="#6c6c6c"/>
<circle cx="1441.8" cy="510.4" r="1.7" fill="#6c6c6c"/>
<circle cx="1435.8" cy="512.9" r="1.7" fill="#6c6c6c"/>
<circle cx="1447.7" cy="512.9" r="1.7" fill="#6c6c6c"/>
<path d="M1442.0 528.0L1444.9 535.4L1452.8 535.9L1446.8 540.9L1448.7 548.6L1442.0 544.4L1435.3 548.6L1437.2 540.9L1431.2 535.9L1439.1 535.4Z" fill="#fff" stroke="#6c6c6c" stroke-width="1.8" stroke-linejoin="round"/>
<g transform="translate(1442 570) rotate(-28)" fill="#6c6c6c"><rect x="-5.6" y="-5.6" width="11.2" height="11.2"/><circle cx="-7.4" cy="-0.4" r="2.7"/><circle cx="0.4" cy="-7.4" r="2.7"/><circle cx="7.2" cy="3.4" r="0.1"/><circle cx="-0.4" cy="7.6" r="2.7"/><circle cx="7.6" cy="0.4" r="2.7"/></g>
<g transform="translate(1442 570) rotate(-28)" fill="#fff"><circle cx="-5.9" cy="-5.9" r="1.9"/><circle cx="5.9" cy="-5.9" r="1.9"/><circle cx="5.9" cy="5.9" r="1.9"/><circle cx="-5.9" cy="5.9" r="1.9"/></g>
<rect x="1439" y="594.2" width="13.8" height="13.8" rx="1.6" fill="#6c6c6c"/><rect x="1431.2" y="597.8" width="14" height="13.4" rx="1.6" fill="#6c6c6c"/>
<path d="M1445 597.6H1440.4C1438 597.6 1438 600.6 1440.4 600.6H1443.6C1446 600.6 1446 603.6 1443.6 603.6H1440.4C1438 603.6 1438 606.6 1440.4 606.6H1443.6C1446 606.6 1446 609.4 1443.6 609.4H1438.4" fill="none" stroke="#fff" stroke-width="1"/>
<path d="M1434.4 629.4L1441.4 627.4L1433.6 638.6L1448.6 628.2L1436.4 643.6L1450 633.4L1441.6 643.6L1449.4 640" fill="none" stroke="#6c6c6c" stroke-width="1.3" stroke-linejoin="round"/>
<circle cx="1442" cy="668.6" r="10" fill="#6c6c6c"/><path d="M1437.4 658V679M1446.6 658V679M1431 664H1453M1431 673.2H1453" stroke="#fff" stroke-width="1.1"/>
<path d="M1446 690.4L1433.6 697.6V710.6L1435.6 709.6M1446 690.4V694" fill="none" stroke="#6c6c6c" stroke-width="1.2"/>
<path d="M1438.2 700.4L1450.6 693.4V707.6L1438.2 714.4Z" fill="#fff" stroke="#6c6c6c" stroke-width="1.2"/><path d="M1439.6 701.6L1446 698V705.6L1439.6 709.2Z" fill="#6c6c6c"/>
<path d="M1430.8 723.4C1438 727.6 1446 727.6 1453.4 723.4V746C1446 741.6 1438 741.6 1430.8 746ZM1438.4 726V742.6M1446 726V742.6M1430.8 730.6C1438 733.6 1446 733.6 1453.4 730.6M1430.8 738.4C1438 736.4 1446 736.4 1453.4 738.4" fill="none" stroke="#6c6c6c" stroke-width="1.2"/>
<rect x="1430" y="758.8" width="26" height="18.2" fill="none" stroke="#8a8a8a" stroke-width="1" stroke-dasharray="3 2.4"/>
<path d="M1442.8 759V777" stroke="#8a8a8a" stroke-width="1" stroke-dasharray="2 2"/>
<path d="M1430.8 789H1453.4V810.6C1448 814.6 1441 806.6 1430.8 810.6Z" fill="#fff" stroke="#6c6c6c" stroke-width="1.2"/>
<path d="M1433.6 797.2L1437.2 791.6L1440.8 797.2ZM1443 791.8H1450.4L1446.8 797.4ZM1433.6 805.6L1437.2 800L1440.8 805.6ZM1443 800.2H1450.4L1446.8 805.8ZM1443.4 808.6H1450L1446.8 812.6Z" fill="none" stroke="#6c6c6c" stroke-width="1"/>
<g transform="translate(1442 959.4)" fill="#2f8fd6"><circle r="7.2"/><rect x="-2" y="-9.6" width="4" height="5" rx="0.8" transform="rotate(0)"/><rect x="-2" y="-9.6" width="4" height="5" rx="0.8" transform="rotate(45)"/><rect x="-2" y="-9.6" width="4" height="5" rx="0.8" transform="rotate(90)"/><rect x="-2" y="-9.6" width="4" height="5" rx="0.8" transform="rotate(135)"/><rect x="-2" y="-9.6" width="4" height="5" rx="0.8" transform="rotate(180)"/><rect x="-2" y="-9.6" width="4" height="5" rx="0.8" transform="rotate(225)"/><rect x="-2" y="-9.6" width="4" height="5" rx="0.8" transform="rotate(270)"/><rect x="-2" y="-9.6" width="4" height="5" rx="0.8" transform="rotate(315)"/><circle r="3.3" fill="#fff"/></g>
</svg>
<div class="abs" style="left:958px;top:1px;width:497px;height:28px;background:#17808f"></div>
<div class="abs" style="left:958px;top:1px;width:124px;height:28px;background:#20c0de"></div>
<div class="abs" style="left:958px;top:28px;width:497px;height:1px;background:#14606c"></div>
<div class="tab" style="left:1007.5px;color:#fff;transform:scaleX(0.88)">DESIGN</div>
<div class="tab" style="left:1138px;transform:scaleX(0.815)">STORE</div>
<div class="tab" style="left:1247.5px;transform:scaleX(0.885)">BIBLIOTHEK</div>
<div class="tab" style="left:1383.5px;transform:scaleX(0.89)">SENDEN</div>
<svg width="1455" height="60" viewBox="0 0 1455 60">
<g fill="none" stroke="#dcdcdc">
<circle cx="10.8" cy="13.2" r="7.4" stroke-width="2.2"/><path d="M7 13.2H14.6" stroke-width="2"/><path d="M16 18.6L20.3 23" stroke-width="3.2"/>
<circle cx="44.5" cy="18.6" r="4" stroke-width="1.3"/><path d="M42.3 18.6H46.7M44.5 16.4V20.8" stroke-width="1.2"/><path d="M47.6 21.8L50.6 24.6" stroke-width="1.8"/>
<rect x="121.8" y="7.6" width="20.4" height="14.6" stroke-width="1.7"/><path d="M126.5 14.9H137.5M132 9.8V20" stroke-width="1.6"/>
</g>
<g fill="#dcdcdc">
<path d="M38.5 5.9A6.9 6.9 0 0 0 32.4 12H38.5ZM39.9 5.9V12H46A6.9 6.9 0 0 0 39.9 5.9ZM32.4 13.4A6.9 6.9 0 0 0 39.6 20A5.6 5.6 0 0 1 39.2 13.4Z"/>
<path d="M72.1 3.4L79.8 7.8H75.9V13.3H83.6L72 24.8L60.3 13.3H68.1V7.8H64.4Z"/>
<path d="M99.5 24.6C97.5 21 95 18.5 93 16.3C92.6 15.5 93.6 14.6 94.7 15.2L98 17.6L97 8.2C97 7 98.8 6.9 99 8.1L100.4 14.3L100.6 5.6C100.7 4.4 102.4 4.4 102.5 5.6L103 14.2L104.6 6.4C104.9 5.3 106.5 5.6 106.4 6.8L105.6 15L108.6 9.6C109.2 8.7 110.6 9.4 110.2 10.5C108.8 14.5 107.6 18.5 106 24.6Z"/>
</g>
<g>
<rect x="979.5" y="5" width="20.5" height="19.4" rx="1.8" fill="#fff"/>
<rect x="982.0" y="7.4" width="4.3" height="4" fill="#8fdcec"/>
<rect x="987.6" y="7.4" width="4.3" height="4" fill="#8fdcec"/>
<rect x="993.2" y="7.4" width="4.3" height="4" fill="#8fdcec"/>
<rect x="982.0" y="12.7" width="4.3" height="4" fill="#8fdcec"/>
<rect x="987.6" y="12.7" width="4.3" height="4" fill="#8fdcec"/>
<rect x="993.2" y="12.7" width="4.3" height="4" fill="#8fdcec"/>
<rect x="982.0" y="18.0" width="4.3" height="4" fill="#8fdcec"/>
<rect x="987.6" y="18.0" width="4.3" height="4" fill="#8fdcec"/>
<rect x="993.2" y="18.0" width="4.3" height="4" fill="#8fdcec"/>
<circle cx="1119.8" cy="14.6" r="9.6" fill="#a9c9cf"/>
<path d="M1124.5 9.2C1121 7.2 1116.2 8.6 1116 11.6C1115.8 15 1123 14.6 1123 18C1123 20.4 1119 21.4 1115.2 19.6" fill="none" stroke="#17808f" stroke-width="2.3" stroke-linecap="round"/>
<path d="M1215.5 5.2Q1215.5 4 1216.8 4H1222.2L1224.4 6.2H1237.4Q1238.8 6.2 1238.8 7.6V22.6Q1238.8 24 1237.4 24H1216.8Q1215.5 24 1215.5 22.6Z" fill="#a9c9cf"/>
<path d="M1225.6 10.4H1228.8V15H1231.8L1227.2 19.8L1222.6 15H1225.6Z" fill="#17808f"/>
<path d="M1350.4 7.4Q1350.4 6.4 1352 6.4H1374Q1375.6 6.4 1375.6 7.4V8.2Q1377.4 8.4 1377.2 10.4Q1377 12 1375 12.2H1373L1374.6 22.8H1351.6L1353 12.2H1351.2Q1349.2 12 1349 10.4Q1348.8 8.4 1350.4 8.2Z" fill="#a9c9cf"/>
<path d="M1355.2 12.4H1370.8L1372.2 20.2H1353.8Z" fill="none" stroke="#17808f" stroke-width="1.2"/>
</g>
<g>
<rect x="159.2" y="44" width="11" height="8.8" fill="#6f6f6f"/>
<path d="M155 44V41.2A3.6 3.6 0 0 1 162.2 41.2V44.4" fill="none" stroke="#6f6f6f" stroke-width="1.5"/>
<circle cx="164.7" cy="47.3" r="1.3" fill="#fff"/><rect x="164.1" y="47.6" width="1.2" height="3" fill="#fff"/>
<path d="M194.6 45.9H209.2M201.9 38.6V53.2" stroke="#7a7a7a" stroke-width="1.4" fill="none"/>
<path d="M201.9 37.6L204.2 40.4H199.6ZM201.9 54.2L204.2 51.4H199.6ZM193.6 45.9L196.4 43.6V48.2ZM210.2 45.9L207.4 43.6V48.2Z" fill="#7a7a7a"/>
<path d="M212 60L218 54.2V60Z" fill="#6f6f6f"/>
<path d="M387 38H401M387 45H401M387 52H401M387 38V52M394 38V52M401 38V52" stroke="#cfcfcf" stroke-width="1" fill="none"/>
<rect x="384" y="35" width="6.2" height="6.2" fill="#20c0de"/>
<rect x="392.4" y="36.4" width="3.4" height="3.4" fill="#fff" stroke="#8a8a8a" stroke-width="1"/>
<rect x="399.4" y="36.4" width="3.4" height="3.4" fill="#fff" stroke="#8a8a8a" stroke-width="1"/>
<rect x="385.4" y="43.4" width="3.4" height="3.4" fill="#fff" stroke="#8a8a8a" stroke-width="1"/>
<rect x="392.4" y="43.4" width="3.4" height="3.4" fill="#fff" stroke="#8a8a8a" stroke-width="1"/>
<rect x="399.4" y="43.4" width="3.4" height="3.4" fill="#fff" stroke="#8a8a8a" stroke-width="1"/>
<rect x="385.4" y="50.4" width="3.4" height="3.4" fill="#fff" stroke="#8a8a8a" stroke-width="1"/>
<rect x="392.4" y="50.4" width="3.4" height="3.4" fill="#fff" stroke="#8a8a8a" stroke-width="1"/>
<rect x="399.4" y="50.4" width="3.4" height="3.4" fill="#fff" stroke="#8a8a8a" stroke-width="1"/>
<path d="M424 45.9H444.4" stroke="#b8b8b8" stroke-width="1"/>
<rect x="426.1" y="40" width="3.8" height="12" fill="#6f6f6f"/><rect x="432" y="42.2" width="4" height="7.6" fill="#6f6f6f"/><rect x="438" y="38" width="3.8" height="16" fill="#6f6f6f"/>
<path d="M444.2 60L449.8 54.2V60Z" fill="#6f6f6f"/>
<rect x="458" y="35.9" width="16.6" height="20.2" fill="none" stroke="#6f6f6f" stroke-width="1.3"/>
<circle cx="466.2" cy="45.9" r="2.7" fill="none" stroke="#6f6f6f" stroke-width="1.1"/><path d="M460.4 45.9H472M466.2 40V51.8" stroke="#6f6f6f" stroke-width="1" fill="none"/>
<rect x="500.5" y="43.5" width="9" height="9" fill="none" stroke="#c9c9c9" stroke-width="1.2"/>
<path d="M504 39.6H513.6V48" fill="none" stroke="#c9c9c9" stroke-width="1.2"/>
<rect x="498.7" y="38.3" width="2.6" height="2.6" fill="#c9c9c9"/>
<rect x="512.3" y="38.3" width="2.6" height="2.6" fill="#c9c9c9"/>
<rect x="499.1" y="51.3" width="2.6" height="2.6" fill="#c9c9c9"/>
<rect x="512.3" y="51.3" width="2.6" height="2.6" fill="#c9c9c9"/>
<rect x="532.3" y="43.5" width="9.6" height="9" fill="none" stroke="#c9c9c9" stroke-width="1.2"/>
<path d="M536 39.6H546V48.6" fill="none" stroke="#c9c9c9" stroke-width="1.2"/>
<rect x="534.7" y="38.3" width="2.6" height="2.6" fill="#c9c9c9"/>
<rect x="544.7" y="38.3" width="2.6" height="2.6" fill="#c9c9c9"/>
<rect x="544.7" y="47.3" width="2.6" height="2.6" fill="#c9c9c9"/>
<rect x="531.0" y="51.3" width="2.6" height="2.6" fill="#c9c9c9"/>
<rect x="540.7" y="51.3" width="2.6" height="2.6" fill="#c9c9c9"/>
<rect x="531.0" y="42.3" width="2.6" height="2.6" fill="#c9c9c9"/>
<rect x="570.8" y="37.3" width="7.6" height="7" fill="#d0d0d0" stroke="#6f6f6f" stroke-width="1.5"/>
<rect x="582" y="48" width="7.2" height="7" fill="#d0d0d0" stroke="#6f6f6f" stroke-width="1.5"/>
<rect x="576" y="41" width="9.4" height="9" fill="#fff" stroke="#6f6f6f" stroke-width="2.1"/>
<path d="M612 41H616.6V45.6M612 46.8V51.2H616" fill="none" stroke="#6f6f6f" stroke-width="1.9"/>
<rect x="603.3" y="37.3" width="7.2" height="7" fill="#b0b0b0" stroke="#6f6f6f" stroke-width="1.5"/>
<rect x="614" y="48" width="7.2" height="7" fill="#b0b0b0" stroke="#6f6f6f" stroke-width="1.5"/>
<rect x="635" y="37.3" width="9.4" height="8" fill="#c4c4c4" stroke="#6f6f6f" stroke-width="1.5"/>
<rect x="640.6" y="42.7" width="12" height="11.6" fill="#fff" stroke="#6f6f6f" stroke-width="2.5"/>
<path d="M678.6 43.4H684.4V54.2H672.8V48" fill="none" stroke="#6f6f6f" stroke-width="2.3"/>
<rect x="667" y="37.3" width="10" height="8.8" fill="#b0b0b0" stroke="#6f6f6f" stroke-width="1.5"/>
<rect x="706.3" y="44" width="16.6" height="12.4" fill="#b4b4b4"/><circle cx="723.5" cy="43.7" r="6" fill="#b4b4b4"/>
<path d="M749.0 35.0L752.3 42.5L760.4 43.3L754.3 48.7L756.1 56.7L749.0 52.6L741.9 56.7L743.7 48.7L737.6 43.3L745.7 42.5Z" fill="#fff" stroke="#6f6f6f" stroke-width="1.3" stroke-linejoin="round"/>
<path d="M749.0 39.7L751.0 44.5L756.2 45.0L752.2 48.4L753.5 53.4L749.0 50.7L744.5 53.4L745.8 48.4L741.8 45.0L747.0 44.5Z" fill="#6f6f6f" stroke="#6f6f6f" stroke-width="1" stroke-linejoin="round"/>
<path d="M785.0 34.6L791.4 38.1L791.4 47.0L785.0 49.9L778.6 47.0L778.6 38.1ZM778.6 38.1L785.0 41.6L791.4 38.1M785.0 41.6V49.9" fill="#fff" stroke="#6f6f6f" stroke-width="1.2" stroke-linejoin="round"/>
<path d="M795.6 40.6L802.0 44.1L802.0 53.0L795.6 55.9L789.2 53.0L789.2 44.1ZM789.2 44.1L795.6 47.6L802.0 44.1M795.6 47.6V55.9" fill="#fff" stroke="#6f6f6f" stroke-width="1.2" stroke-linejoin="round"/>
<path d="M814 37.8L830.6 54.2M830.6 37.8L814 54.2" stroke="#6f6f6f" stroke-width="2" fill="none"/>
</g>
</svg>
<div class="fld" style="left:3px;width:52px">68,67</div>
<div class="lbl c" style="left:61.5px">H</div>
<div class="fld" style="left:72px;width:52px">89,76</div>
<div class="lbl" style="left:126px">mm</div>
<div class="lbl c" style="left:221.5px">X</div>
<div class="fld" style="left:233px;width:52px">29,47</div>
<div class="lbl c" style="left:291.5px">Y</div>
<div class="fld" style="left:303px;width:52px">19,14</div>
<div class="lbl" style="left:357px">mm</div>
<div class="dv" style="left:181px"></div>
<div class="dv" style="left:413px"></div>
<div class="dv" style="left:486px"></div>
<div class="dv" style="left:559px"></div>
<div class="dv" style="left:696px"></div>
<div class="dv" style="left:769px"></div>
<div class="abs" style="left:1101px;top:103px;width:290px;height:331px;background:#fff;border:1px solid #8a8a8a;border-top:none"></div>
<div class="abs" style="left:1101px;top:103px;width:290px;height:18px;background:#7c7c7c;color:#dedede;font-size:11px;line-height:18px;text-align:center;padding-right:16px">FÜLLUNG</div>
<div class="abs" style="left:1102px;top:121px;width:31px;height:31px;background:#fff;border:2px solid #20c0de"></div>
<div class="abs" style="left:1135px;top:123px;width:29px;height:28px;background:linear-gradient(90deg,#6e6e6e,#fff 92%)"></div>
<div class="abs" style="left:1167px;top:123px;width:28px;height:28px;background:#d4d4d4;overflow:hidden"></div>
<div class="abs" style="left:1102px;top:153px;width:288px;height:16px;background:#e1e1e1;color:#444;font-size:10px;line-height:16px;padding-left:7px">Kürzlich benutzt</div>
<div class="abs" style="left:1102px;top:215px;width:269px;height:16px;background:#e1e1e1;color:#444;font-size:10px;line-height:16px;padding-left:7px">Füllfarbe</div>
<div class="abs" style="left:1109px;top:176px;width:14px;height:14px;background:#31b573"></div>
<div class="abs" style="left:1127px;top:176px;width:14px;height:14px;background:#22a650"></div>
<div class="abs" style="left:1145px;top:176px;width:14px;height:14px;background:#f7ec3c"></div>
<div class="abs" style="left:1163px;top:176px;width:14px;height:14px;background:#b5236a"></div>
<div class="abs" style="left:1181px;top:176px;width:14px;height:14px;background:#f6a5a8"></div>
<div class="abs" style="left:1199px;top:176px;width:14px;height:14px;background:#f05a28"></div>
<div class="abs" style="left:1217px;top:176px;width:14px;height:14px;background:#000000"></div>
<div class="abs" style="left:1235px;top:176px;width:14px;height:14px;background:#2d5a68"></div>
<div class="abs" style="left:1253px;top:176px;width:14px;height:14px;background:#ec2027"></div>
<div class="abs" style="left:1271px;top:176px;width:14px;height:14px;background:#26324a"></div>
<div class="abs" style="left:1289px;top:176px;width:14px;height:14px;background:#b3e2f8"></div>
<div class="abs" style="left:1127px;top:194px;width:14px;height:14px;background:#8e8e8e"></div>
<div class="abs" style="left:1145px;top:194px;width:14px;height:14px;background:#edede3"></div>
<div class="abs" style="left:1163px;top:194px;width:14px;height:14px;background:#d2d2d2"></div>
<div class="abs" style="left:1181px;top:194px;width:14px;height:14px;background:#ffffff;border:1px solid #d8d8d8;left:1180px;top:193px;width:16px;height:16px"></div>
<div class="abs" style="left:1199px;top:194px;width:14px;height:14px;background:#9b96cf"></div>
<div class="abs" style="left:1217px;top:194px;width:14px;height:14px;background:#6a3296"></div>
<div class="abs" style="left:1235px;top:194px;width:14px;height:14px;background:#5752a4"></div>
<div class="abs" style="left:1253px;top:194px;width:14px;height:14px;background:#2b7a45"></div>
<div class="abs" style="left:1271px;top:194px;width:14px;height:14px;background:#4f2b1b"></div>
<div class="abs" style="left:1289px;top:194px;width:14px;height:14px;background:#fdd2a8"></div>
<div class="abs" style="left:1343px;top:176px;width:32px;height:32px;background:#2d5a68"></div>
<div class="abs" style="left:1144px;top:241px;width:16px;height:16px;background:#fff;border:1px solid #d8d8d8"></div>
<div class="abs" style="left:1163px;top:242px;width:14px;height:14px;background:#ebebeb"></div>
<div class="abs" style="left:1181px;top:242px;width:14px;height:14px;background:#d4d4d4"></div>
<div class="abs" style="left:1199px;top:242px;width:14px;height:14px;background:#bdbdbd"></div>
<div class="abs" style="left:1217px;top:242px;width:14px;height:14px;background:#a6a6a6"></div>
<div class="abs" style="left:1235px;top:242px;width:14px;height:14px;background:#909090"></div>
<div class="abs" style="left:1253px;top:242px;width:14px;height:14px;background:#7a7a7a"></div>
<div class="abs" style="left:1271px;top:242px;width:14px;height:14px;background:#646464"></div>
<div class="abs" style="left:1289px;top:242px;width:14px;height:14px;background:#505050"></div>
<div class="abs" style="left:1307px;top:242px;width:14px;height:14px;background:#3c3c3c"></div>
<div class="abs" style="left:1325px;top:242px;width:14px;height:14px;background:#282828"></div>
<div class="abs" style="left:1343px;top:242px;width:14px;height:14px;background:#141414"></div>
<div class="abs" style="left:1361px;top:242px;width:14px;height:14px;background:#000000"></div>
<div class="abs" style="left:1127px;top:260px;width:14px;height:14px;background:#ec2027"></div>
<div class="abs" style="left:1145px;top:260px;width:14px;height:14px;background:#b5236a"></div>
<div class="abs" style="left:1163px;top:260px;width:14px;height:14px;background:#67308f"></div>
<div class="abs" style="left:1181px;top:260px;width:14px;height:14px;background:#5151a4"></div>
<div class="abs" style="left:1199px;top:260px;width:14px;height:14px;background:#1c75b8"></div>
<div class="abs" style="left:1217px;top:260px;width:14px;height:14px;background:#6fc6bd"></div>
<div class="abs" style="left:1235px;top:260px;width:14px;height:14px;background:#22a650"></div>
<div class="abs" style="left:1253px;top:260px;width:14px;height:14px;background:#acd037"></div>
<div class="abs" style="left:1271px;top:260px;width:14px;height:14px;background:#f7ec2b"></div>
<div class="abs" style="left:1289px;top:260px;width:14px;height:14px;background:#fdb51c"></div>
<div class="abs" style="left:1307px;top:260px;width:14px;height:14px;background:#f68b28"></div>
<div class="abs" style="left:1325px;top:260px;width:14px;height:14px;background:#f05a2a"></div>
<div class="abs" style="left:1343px;top:260px;width:14px;height:14px;background:#865b3b"></div>
<div class="abs" style="left:1361px;top:260px;width:14px;height:14px;background:#4f2b1b"></div>
<div class="abs" style="left:1127px;top:278px;width:14px;height:14px;background:#f04d52"></div>
<div class="abs" style="left:1145px;top:278px;width:14px;height:14px;background:#c44f88"></div>
<div class="abs" style="left:1163px;top:278px;width:14px;height:14px;background:#8559a5"></div>
<div class="abs" style="left:1181px;top:278px;width:14px;height:14px;background:#7474b6"></div>
<div class="abs" style="left:1199px;top:278px;width:14px;height:14px;background:#4991c6"></div>
<div class="abs" style="left:1217px;top:278px;width:14px;height:14px;background:#8cd1ca"></div>
<div class="abs" style="left:1233px;top:276px;width:18px;height:18px;background:#e3e3e3"></div>
<div class="abs" style="left:1237px;top:280px;width:10px;height:10px;background:#31b573"></div>
<div class="abs" style="left:1253px;top:278px;width:14px;height:14px;background:#bdd95f"></div>
<div class="abs" style="left:1271px;top:278px;width:14px;height:14px;background:#f9f055"></div>
<div class="abs" style="left:1289px;top:278px;width:14px;height:14px;background:#fdc449"></div>
<div class="abs" style="left:1307px;top:278px;width:14px;height:14px;background:#f8a253"></div>
<div class="abs" style="left:1325px;top:278px;width:14px;height:14px;background:#f37b55"></div>
<div class="abs" style="left:1343px;top:278px;width:14px;height:14px;background:#9e7c62"></div>
<div class="abs" style="left:1361px;top:278px;width:14px;height:14px;background:#725549"></div>
<div class="abs" style="left:1127px;top:296px;width:14px;height:14px;background:#f4797d"></div>
<div class="abs" style="left:1145px;top:296px;width:14px;height:14px;background:#d37ba6"></div>
<div class="abs" style="left:1163px;top:296px;width:14px;height:14px;background:#a483bc"></div>
<div class="abs" style="left:1181px;top:296px;width:14px;height:14px;background:#9797c8"></div>
<div class="abs" style="left:1199px;top:296px;width:14px;height:14px;background:#77acd4"></div>
<div class="abs" style="left:1217px;top:296px;width:14px;height:14px;background:#a9ddd7"></div>
<div class="abs" style="left:1235px;top:296px;width:14px;height:14px;background:#7aca96"></div>
<div class="abs" style="left:1253px;top:296px;width:14px;height:14px;background:#cde387"></div>
<div class="abs" style="left:1271px;top:296px;width:14px;height:14px;background:#faf480"></div>
<div class="abs" style="left:1289px;top:296px;width:14px;height:14px;background:#fed377"></div>
<div class="abs" style="left:1307px;top:296px;width:14px;height:14px;background:#fab97e"></div>
<div class="abs" style="left:1325px;top:296px;width:14px;height:14px;background:#f69c7f"></div>
<div class="abs" style="left:1343px;top:296px;width:14px;height:14px;background:#b69d89"></div>
<div class="abs" style="left:1361px;top:296px;width:14px;height:14px;background:#958076"></div>
<div class="abs" style="left:1127px;top:314px;width:14px;height:14px;background:#f7a6a9"></div>
<div class="abs" style="left:1145px;top:314px;width:14px;height:14px;background:#e1a7c3"></div>
<div class="abs" style="left:1163px;top:314px;width:14px;height:14px;background:#c2acd2"></div>
<div class="abs" style="left:1181px;top:314px;width:14px;height:14px;background:#b9b9db"></div>
<div class="abs" style="left:1199px;top:314px;width:14px;height:14px;background:#a4c8e3"></div>
<div class="abs" style="left:1217px;top:314px;width:14px;height:14px;background:#c5e8e5"></div>
<div class="abs" style="left:1235px;top:314px;width:14px;height:14px;background:#a7dbb9"></div>
<div class="abs" style="left:1253px;top:314px;width:14px;height:14px;background:#deecaf"></div>
<div class="abs" style="left:1271px;top:314px;width:14px;height:14px;background:#fcf7aa"></div>
<div class="abs" style="left:1289px;top:314px;width:14px;height:14px;background:#fee1a4"></div>
<div class="abs" style="left:1307px;top:314px;width:14px;height:14px;background:#fbd1a9"></div>
<div class="abs" style="left:1325px;top:314px;width:14px;height:14px;background:#f9bdaa"></div>
<div class="abs" style="left:1343px;top:314px;width:14px;height:14px;background:#cfbdb1"></div>
<div class="abs" style="left:1361px;top:314px;width:14px;height:14px;background:#b9aaa4"></div>
<div class="abs" style="left:1127px;top:332px;width:14px;height:14px;background:#fbd2d4"></div>
<div class="abs" style="left:1145px;top:332px;width:14px;height:14px;background:#f0d3e1"></div>
<div class="abs" style="left:1163px;top:332px;width:14px;height:14px;background:#e1d6e9"></div>
<div class="abs" style="left:1181px;top:332px;width:14px;height:14px;background:#dcdced"></div>
<div class="abs" style="left:1199px;top:332px;width:14px;height:14px;background:#d2e3f1"></div>
<div class="abs" style="left:1217px;top:332px;width:14px;height:14px;background:#e2f4f2"></div>
<div class="abs" style="left:1235px;top:332px;width:14px;height:14px;background:#d3eddc"></div>
<div class="abs" style="left:1253px;top:332px;width:14px;height:14px;background:#eef6d7"></div>
<div class="abs" style="left:1271px;top:332px;width:14px;height:14px;background:#fdfbd5"></div>
<div class="abs" style="left:1289px;top:332px;width:14px;height:14px;background:#fff0d2"></div>
<div class="abs" style="left:1307px;top:332px;width:14px;height:14px;background:#fde8d4"></div>
<div class="abs" style="left:1325px;top:332px;width:14px;height:14px;background:#fcded4"></div>
<div class="abs" style="left:1343px;top:332px;width:14px;height:14px;background:#e7ded8"></div>
<div class="abs" style="left:1361px;top:332px;width:14px;height:14px;background:#dcd5d1"></div>
<div class="abs" style="left:1127px;top:355px;width:230px;height:18px;background:#e1e1e1;color:#4a4a4a;font-size:12px;line-height:18px;padding-left:9px;letter-spacing:-0.2px">New Palette Name...</div>
<div class="abs" style="left:1107px;top:383px;color:#444;font-size:11px;line-height:14px">Transparenz</div>
<div class="abs" style="left:1203px;top:379px;width:83px;height:25px;background:#e1e1e1"></div>
<div class="abs" style="left:1293px;top:379px;width:52px;height:25px;background:#e1e1e1;color:#444;font-size:12px;line-height:27px;padding-left:3px;letter-spacing:-0.3px">0,0</div>
<div class="abs" style="left:1359px;top:383px;color:#444;font-size:12px;line-height:14px">%</div>
<div class="abs" style="left:1123px;top:413px;color:#3c3c3c;font-size:12px;font-weight:bold;line-height:16px;white-space:nowrap">Erweiterte Optionen</div>
<svg width="1455" height="971" viewBox="0 0 1455 971">
<path d="M1104.4 108.8L1109 113.4L1113.6 108.8" fill="none" stroke="#e0e0e0" stroke-width="1.4"/>
<path d="M1379 107.4L1386.2 114.6M1386.2 107.4L1379 114.6" fill="none" stroke="#e0e0e0" stroke-width="1.2"/>
<clipPath id="cpat"><rect x="1167" y="123" width="28" height="28"/></clipPath>
<g fill="#777" clip-path="url(#cpat)"><circle cx="1170.9" cy="128.6" r="2.6"/><circle cx="1180.9" cy="128.6" r="2.6"/><circle cx="1190.9" cy="128.6" r="2.6"/><circle cx="1167.0" cy="136.8" r="2.6"/><circle cx="1175.9" cy="136.8" r="2.6"/><circle cx="1185.9" cy="136.8" r="2.6"/><circle cx="1195.0" cy="136.8" r="2.6"/><circle cx="1170.9" cy="145.4" r="2.6"/><circle cx="1180.9" cy="145.4" r="2.6"/><circle cx="1190.9" cy="145.4" r="2.6"/></g>
<g stroke="#8a8a8a" stroke-width="0.9" fill="none"><path d="M1109.5 201.5L1115.5 195.5L1122.0 201.5L1115.5 207.5Z"/><path d="M1112.5 198.5L1117.5 193.5M1119.0 198.5L1115.0 193.5"/></g>
<g stroke="#8a8a8a" stroke-width="0.9" fill="none"><path d="M1127.5 249.5L1133.5 243.5L1140.0 249.5L1133.5 255.5Z"/><path d="M1130.5 246.5L1135.5 241.5M1137.0 246.5L1133.0 241.5"/></g>
<g transform="translate(1116.0 249.0) scale(1.00)"><path d="M0 -5.6C3.6 -5.6 6.4 -3.2 6.4 -0.4C6.4 1.8 4.8 2.6 3.2 2.4C1.8 2.2 1.2 3 1.6 4C2 5 1.2 5.6 0 5.6C-3.6 5.6 -6.4 3.2 -6.4 0C-6.4 -3.2 -3.6 -5.6 0 -5.6Z" fill="#777"/><circle cx="-3.4" cy="0.6" r="1.1" fill="#fff"/><circle cx="-2.2" cy="-2.6" r="1.1" fill="#fff"/><circle cx="1" cy="-3.4" r="1.1" fill="#fff"/><circle cx="3.8" cy="-1.4" r="1.1" fill="#fff"/></g>
<g transform="translate(1116.0 364.0) scale(1.00)"><path d="M0 -5.6C3.6 -5.6 6.4 -3.2 6.4 -0.4C6.4 1.8 4.8 2.6 3.2 2.4C1.8 2.2 1.2 3 1.6 4C2 5 1.2 5.6 0 5.6C-3.6 5.6 -6.4 3.2 -6.4 0C-6.4 -3.2 -3.6 -5.6 0 -5.6Z" fill="#777"/><circle cx="-3.4" cy="0.6" r="1.1" fill="#fff"/><circle cx="-2.2" cy="-2.6" r="1.1" fill="#fff"/><circle cx="1" cy="-3.4" r="1.1" fill="#fff"/><circle cx="3.8" cy="-1.4" r="1.1" fill="#fff"/></g>
<g transform="translate(1324 192.5) rotate(45)"><rect x="-3.4" y="-14.6" width="6.8" height="6.4" rx="2.2" fill="#111"/><rect x="-4.6" y="-8.6" width="9.2" height="2.6" fill="#111"/><path d="M-2.6 -6V7.4L0 12.6L2.6 7.4V-6Z" fill="#fff" stroke="#111" stroke-width="1.3"/><path d="M-2 3.4H2V7.4L0 11.4L-2 7.4Z" fill="#33b5e5"/></g>
<path d="M1376.4 219.4H1386L1381.2 227.2Z" fill="#8c8c8c"/>
<path d="M1363 364H1373M1368 359V369" stroke="#666" stroke-width="1.3" fill="none"/>
<path d="M1207.5 379V396" stroke="#777" stroke-width="1"/><path d="M1202.6 403.4L1208 393.6L1213.6 403.4Z" fill="#808080"/>
<path d="M1346.6 388L1350 382.4L1353.4 388ZM1346.6 394.4L1350 400L1353.4 394.4Z" fill="#9a9a9a"/>
<circle cx="1111.6" cy="421" r="6" fill="#fff" stroke="#6a6a6a" stroke-width="1.8"/><path d="M1109.6 417.4L1115.6 421L1109.6 424.6Z" fill="#6a6a6a"/>
</svg>
</body></html>
